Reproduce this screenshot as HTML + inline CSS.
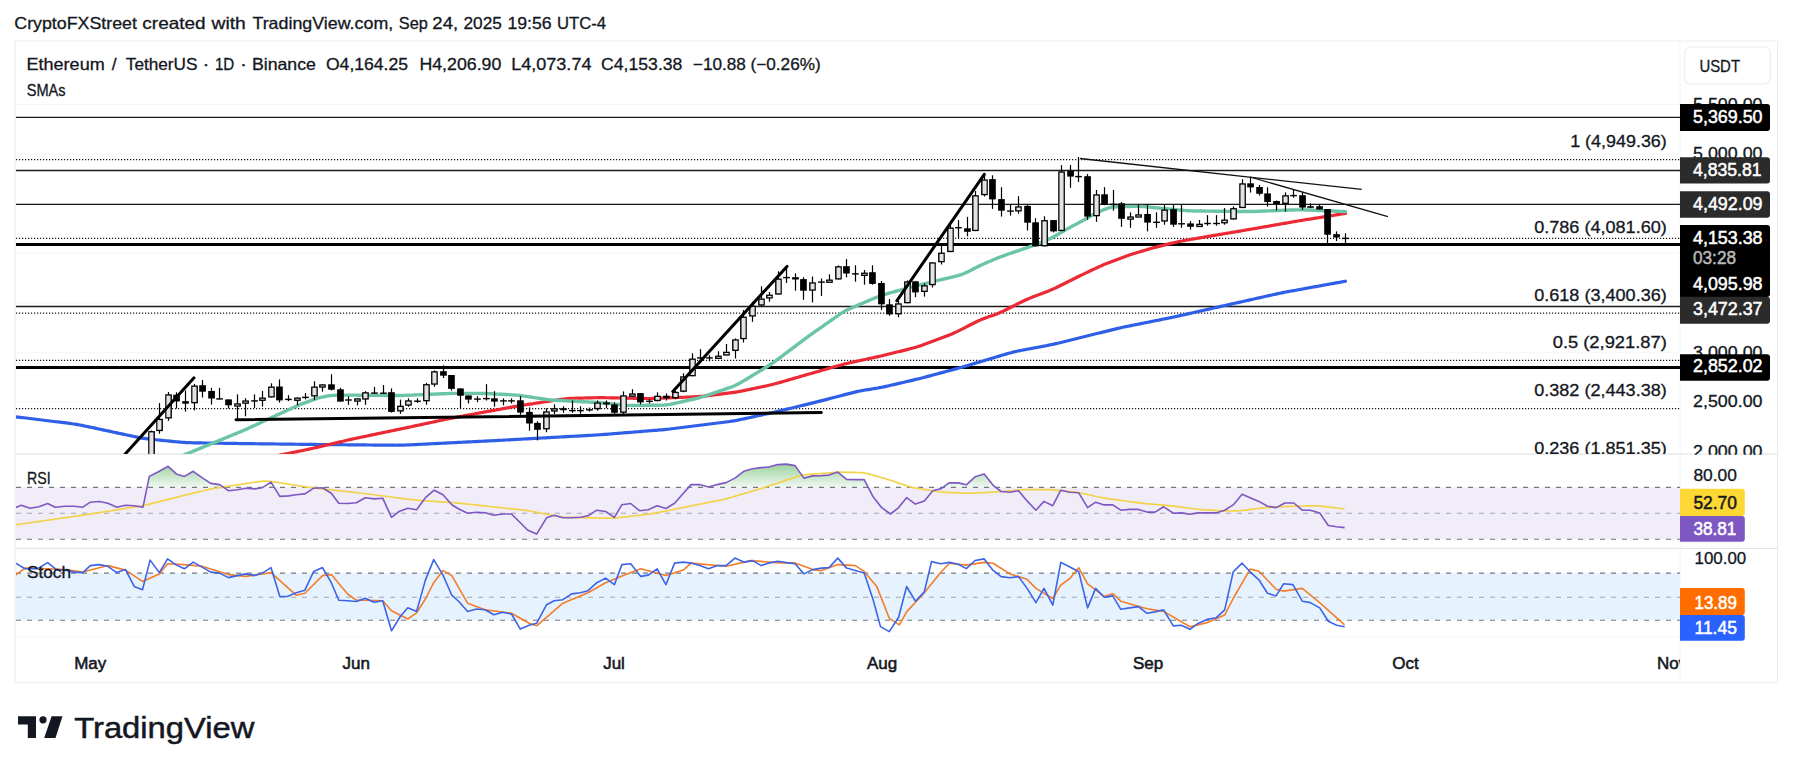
<!DOCTYPE html><html><head><meta charset="utf-8"><title>ETHUSDT chart</title><style>html,body{margin:0;padding:0;background:#fff;width:1793px;height:773px;overflow:hidden}svg{position:absolute;left:0;top:0;display:block}text{font-family:"Liberation Sans",sans-serif}</style></head><body>
<svg width="1793" height="773" viewBox="0 0 1793 773">
<defs><clipPath id="main"><rect x="16" y="42" width="1664" height="412"/></clipPath><clipPath id="rsi"><rect x="16" y="455" width="1664" height="93"/></clipPath><clipPath id="sto"><rect x="16" y="549" width="1664" height="88"/></clipPath><clipPath id="above70"><rect x="16" y="455" width="1664" height="32.4"/></clipPath><linearGradient id="gfill" gradientUnits="userSpaceOnUse" x1="0" y1="462" x2="0" y2="487.4"><stop offset="0" stop-color="#4caf50" stop-opacity="0.6"/><stop offset="1" stop-color="#4caf50" stop-opacity="0.08"/></linearGradient></defs>
<text x="14.32" y="28.8" font-size="16.5" fill="#131722" text-anchor="start" font-weight="normal" textLength="122.57" lengthAdjust="spacingAndGlyphs" stroke="#131722" stroke-width="0.3">CryptoFXStreet</text>
<text x="142.35" y="28.8" font-size="16.5" fill="#131722" text-anchor="start" font-weight="normal" textLength="63.25" lengthAdjust="spacingAndGlyphs" stroke="#131722" stroke-width="0.3">created</text>
<text x="211.5" y="28.8" font-size="16.5" fill="#131722" text-anchor="start" font-weight="normal" textLength="34.3" lengthAdjust="spacingAndGlyphs" stroke="#131722" stroke-width="0.3">with</text>
<text x="252.4" y="28.8" font-size="16.5" fill="#131722" text-anchor="start" font-weight="normal" textLength="140.83" lengthAdjust="spacingAndGlyphs" stroke="#131722" stroke-width="0.3">TradingView.com,</text>
<text x="398.81" y="28.8" font-size="16.5" fill="#131722" text-anchor="start" font-weight="normal" textLength="29.04" lengthAdjust="spacingAndGlyphs" stroke="#131722" stroke-width="0.3">Sep</text>
<text x="432.38" y="28.8" font-size="16.5" fill="#131722" text-anchor="start" font-weight="normal" textLength="25.67" lengthAdjust="spacingAndGlyphs" stroke="#131722" stroke-width="0.3">24,</text>
<text x="463.56" y="28.8" font-size="16.5" fill="#131722" text-anchor="start" font-weight="normal" textLength="38.29" lengthAdjust="spacingAndGlyphs" stroke="#131722" stroke-width="0.3">2025</text>
<text x="507.43" y="28.8" font-size="16.5" fill="#131722" text-anchor="start" font-weight="normal" textLength="44.19" lengthAdjust="spacingAndGlyphs" stroke="#131722" stroke-width="0.3">19:56</text>
<text x="556.99" y="28.8" font-size="16.5" fill="#131722" text-anchor="start" font-weight="normal" textLength="49.11" lengthAdjust="spacingAndGlyphs" stroke="#131722" stroke-width="0.3">UTC-4</text>
<rect x="15" y="41" width="1762.5" height="641.7" fill="none" stroke="#ededed" stroke-width="1.1"/>
<line x1="16" x2="1680" y1="104.5" y2="104.5" stroke="#f6f6f6" stroke-width="1"/>
<line x1="16" x2="1680" y1="154" y2="154" stroke="#f6f6f6" stroke-width="1"/>
<line x1="16" x2="1680" y1="203.6" y2="203.6" stroke="#f6f6f6" stroke-width="1"/>
<line x1="16" x2="1680" y1="253.2" y2="253.2" stroke="#f6f6f6" stroke-width="1"/>
<line x1="16" x2="1680" y1="302.8" y2="302.8" stroke="#f6f6f6" stroke-width="1"/>
<line x1="16" x2="1680" y1="352.3" y2="352.3" stroke="#f6f6f6" stroke-width="1"/>
<line x1="16" x2="1680" y1="401.9" y2="401.9" stroke="#f6f6f6" stroke-width="1"/>
<line x1="16" x2="1777" y1="454.2" y2="454.2" stroke="#e4e4e4" stroke-width="1.2"/>
<line x1="16" x2="1777" y1="548.3" y2="548.3" stroke="#e4e4e4" stroke-width="1.2"/>
<line x1="16" x2="1680" y1="636.8" y2="636.8" stroke="#f4f4f4" stroke-width="1"/>
<line x1="1680" x2="1680" y1="42" y2="682" stroke="#f4f4f4" stroke-width="1"/>
<g clip-path="url(#main)">
<line x1="16" x2="1680" y1="117.4" y2="117.4" stroke="#1a1a1a" stroke-width="1.3"/>
<line x1="16" x2="1680" y1="159.6" y2="159.6" stroke="#111" stroke-width="1.2" stroke-dasharray="1.2 1.8"/>
<line x1="16" x2="1680" y1="170.5" y2="170.5" stroke="#1a1a1a" stroke-width="1.3"/>
<line x1="16" x2="1680" y1="204.4" y2="204.4" stroke="#1a1a1a" stroke-width="1.3"/>
<line x1="16" x2="1680" y1="238.4" y2="238.4" stroke="#111" stroke-width="1.2" stroke-dasharray="1.2 1.8"/>
<line x1="16" x2="1680" y1="306.5" y2="306.5" stroke="#1a1a1a" stroke-width="1.3"/>
<line x1="16" x2="1680" y1="313.2" y2="313.2" stroke="#111" stroke-width="1.2" stroke-dasharray="1.2 1.8"/>
<line x1="16" x2="1680" y1="360.4" y2="360.4" stroke="#111" stroke-width="1.2" stroke-dasharray="1.2 1.8"/>
<line x1="16" x2="1680" y1="408.6" y2="408.6" stroke="#111" stroke-width="1.2" stroke-dasharray="1.2 1.8"/>
<line x1="16" x2="1680" y1="244.5" y2="244.5" stroke="#000" stroke-width="3"/>
<line x1="16" x2="1680" y1="367.4" y2="367.4" stroke="#000" stroke-width="3"/>
<path d="M15.9,416.80 L17.9,417.05 L19.9,417.29 L21.9,417.54 L23.9,417.78 L25.9,418.03 L27.9,418.28 L29.9,418.52 L31.9,418.77 L33.9,419.01 L35.9,419.26 L37.9,419.50 L39.9,419.75 L41.9,420.00 L43.9,420.24 L45.9,420.49 L47.9,420.73 L49.9,420.98 L51.9,421.23 L53.9,421.47 L55.9,421.72 L57.9,421.96 L59.9,422.21 L61.9,422.46 L63.9,422.70 L65.9,422.95 L67.9,423.20 L69.9,423.45 L71.9,423.72 L73.9,424.01 L75.9,424.31 L77.9,424.65 L79.9,425.02 L81.9,425.41 L83.9,425.81 L85.9,426.23 L87.9,426.65 L89.9,427.08 L91.9,427.51 L93.9,427.93 L95.9,428.36 L97.9,428.79 L99.9,429.22 L101.9,429.64 L103.9,430.07 L105.9,430.50 L107.9,430.93 L109.9,431.35 L111.9,431.78 L113.9,432.21 L115.9,432.64 L117.9,433.06 L119.9,433.49 L121.9,433.92 L123.9,434.35 L125.9,434.77 L127.9,435.20 L129.9,435.63 L131.9,436.06 L133.9,436.48 L135.9,436.90 L137.9,437.31 L139.9,437.70 L141.9,438.06 L143.9,438.39 L145.9,438.68 L147.9,438.94 L149.9,439.17 L151.9,439.38 L153.9,439.58 L155.9,439.78 L157.9,439.98 L159.9,440.18 L161.9,440.37 L163.9,440.57 L165.9,440.76 L167.9,440.96 L169.9,441.15 L171.9,441.35 L173.9,441.54 L175.9,441.74 L177.9,441.93 L179.9,442.11 L181.9,442.28 L183.9,442.42 L185.9,442.55 L187.9,442.65 L189.9,442.72 L191.9,442.77 L193.9,442.82 L195.9,442.85 L197.9,442.89 L199.9,442.92 L201.9,442.95 L203.9,442.98 L205.9,443.01 L207.9,443.04 L209.9,443.07 L211.9,443.10 L213.9,443.13 L215.9,443.16 L217.9,443.20 L219.9,443.23 L221.9,443.26 L223.9,443.29 L225.9,443.32 L227.9,443.35 L229.9,443.38 L231.9,443.41 L233.9,443.44 L235.9,443.47 L237.9,443.50 L239.9,443.53 L241.9,443.56 L243.9,443.59 L245.9,443.62 L247.9,443.64 L249.9,443.67 L251.9,443.69 L253.9,443.72 L255.9,443.74 L257.9,443.77 L259.9,443.79 L261.9,443.82 L263.9,443.84 L265.9,443.86 L267.9,443.89 L269.9,443.91 L271.9,443.94 L273.9,443.96 L275.9,443.99 L277.9,444.01 L279.9,444.03 L281.9,444.06 L283.9,444.08 L285.9,444.11 L287.9,444.13 L289.9,444.16 L291.9,444.18 L293.9,444.20 L295.9,444.23 L297.9,444.25 L299.9,444.28 L301.9,444.30 L303.9,444.33 L305.9,444.35 L307.9,444.37 L309.9,444.39 L311.9,444.42 L313.9,444.44 L315.9,444.46 L317.9,444.48 L319.9,444.50 L321.9,444.52 L323.9,444.54 L325.9,444.56 L327.9,444.58 L329.9,444.60 L331.9,444.62 L333.9,444.64 L335.9,444.66 L337.9,444.68 L339.9,444.70 L341.9,444.72 L343.9,444.74 L345.9,444.76 L347.9,444.78 L349.9,444.80 L351.9,444.82 L353.9,444.84 L355.9,444.86 L357.9,444.88 L359.9,444.90 L361.9,444.92 L363.9,444.94 L365.9,444.96 L367.9,444.98 L369.9,445.00 L371.9,445.02 L373.9,445.04 L375.9,445.06 L377.9,445.08 L379.9,445.10 L381.9,445.12 L383.9,445.14 L385.9,445.16 L387.9,445.18 L389.9,445.19 L391.9,445.21 L393.9,445.22 L395.9,445.23 L397.9,445.22 L399.9,445.19 L401.9,445.15 L403.9,445.08 L405.9,445.01 L407.9,444.92 L409.9,444.82 L411.9,444.73 L413.9,444.63 L415.9,444.53 L417.9,444.43 L419.9,444.33 L421.9,444.23 L423.9,444.13 L425.9,444.03 L427.9,443.93 L429.9,443.83 L431.9,443.73 L433.9,443.63 L435.9,443.53 L437.9,443.43 L439.9,443.33 L441.9,443.23 L443.9,443.13 L445.9,443.03 L447.9,442.93 L449.9,442.83 L451.9,442.74 L453.9,442.64 L455.9,442.54 L457.9,442.44 L459.9,442.34 L461.9,442.24 L463.9,442.14 L465.9,442.04 L467.9,441.94 L469.9,441.84 L471.9,441.74 L473.9,441.64 L475.9,441.54 L477.9,441.44 L479.9,441.34 L481.9,441.24 L483.9,441.14 L485.9,441.04 L487.9,440.94 L489.9,440.84 L491.9,440.74 L493.9,440.64 L495.9,440.54 L497.9,440.44 L499.9,440.34 L501.9,440.23 L503.9,440.12 L505.9,440.02 L507.9,439.91 L509.9,439.80 L511.9,439.68 L513.9,439.57 L515.9,439.46 L517.9,439.35 L519.9,439.24 L521.9,439.13 L523.9,439.02 L525.9,438.91 L527.9,438.80 L529.9,438.69 L531.9,438.58 L533.9,438.46 L535.9,438.35 L537.9,438.24 L539.9,438.13 L541.9,438.02 L543.9,437.91 L545.9,437.80 L547.9,437.69 L549.9,437.58 L551.9,437.47 L553.9,437.36 L555.9,437.25 L557.9,437.13 L559.9,437.02 L561.9,436.91 L563.9,436.80 L565.9,436.69 L567.9,436.58 L569.9,436.47 L571.9,436.36 L573.9,436.25 L575.9,436.14 L577.9,436.03 L579.9,435.91 L581.9,435.80 L583.9,435.69 L585.9,435.58 L587.9,435.47 L589.9,435.36 L591.9,435.25 L593.9,435.13 L595.9,435.01 L597.9,434.89 L599.9,434.76 L601.9,434.62 L603.9,434.47 L605.9,434.32 L607.9,434.16 L609.9,434.00 L611.9,433.84 L613.9,433.68 L615.9,433.52 L617.9,433.36 L619.9,433.20 L621.9,433.03 L623.9,432.87 L625.9,432.71 L627.9,432.55 L629.9,432.39 L631.9,432.23 L633.9,432.07 L635.9,431.91 L637.9,431.75 L639.9,431.58 L641.9,431.42 L643.9,431.26 L645.9,431.10 L647.9,430.94 L649.9,430.78 L651.9,430.62 L653.9,430.46 L655.9,430.29 L657.9,430.13 L659.9,429.96 L661.9,429.79 L663.9,429.61 L665.9,429.42 L667.9,429.22 L669.9,429.00 L671.9,428.77 L673.9,428.53 L675.9,428.28 L677.9,428.03 L679.9,427.78 L681.9,427.53 L683.9,427.28 L685.9,427.03 L687.9,426.78 L689.9,426.53 L691.9,426.28 L693.9,426.03 L695.9,425.78 L697.9,425.53 L699.9,425.28 L701.9,425.02 L703.9,424.77 L705.9,424.52 L707.9,424.27 L709.9,424.02 L711.9,423.77 L713.9,423.52 L715.9,423.27 L717.9,423.02 L719.9,422.77 L721.9,422.52 L723.9,422.26 L725.9,422.01 L727.9,421.74 L729.9,421.46 L731.9,421.16 L733.9,420.83 L735.9,420.47 L737.9,420.09 L739.9,419.68 L741.9,419.26 L743.9,418.83 L745.9,418.39 L747.9,417.96 L749.9,417.52 L751.9,417.08 L753.9,416.64 L755.9,416.20 L757.9,415.76 L759.9,415.33 L761.9,414.89 L763.9,414.45 L765.9,414.01 L767.9,413.57 L769.9,413.13 L771.9,412.69 L773.9,412.24 L775.9,411.78 L777.9,411.32 L779.9,410.85 L781.9,410.37 L783.9,409.89 L785.9,409.41 L787.9,408.93 L789.9,408.45 L791.9,407.97 L793.9,407.49 L795.9,407.00 L797.9,406.52 L799.9,406.04 L801.9,405.56 L803.9,405.08 L805.9,404.59 L807.9,404.11 L809.9,403.63 L811.9,403.14 L813.9,402.65 L815.9,402.16 L817.9,401.66 L819.9,401.15 L821.9,400.64 L823.9,400.13 L825.9,399.61 L827.9,399.09 L829.9,398.57 L831.9,398.04 L833.9,397.52 L835.9,397.00 L837.9,396.48 L839.9,395.96 L841.9,395.44 L843.9,394.92 L845.9,394.39 L847.9,393.87 L849.9,393.36 L851.9,392.85 L853.9,392.35 L855.9,391.87 L857.9,391.42 L859.9,391.00 L861.9,390.62 L863.9,390.26 L865.9,389.93 L867.9,389.62 L869.9,389.31 L871.9,389.01 L873.9,388.69 L875.9,388.37 L877.9,388.02 L879.9,387.66 L881.9,387.26 L883.9,386.84 L885.9,386.41 L887.9,385.95 L889.9,385.50 L891.9,385.03 L893.9,384.57 L895.9,384.10 L897.9,383.64 L899.9,383.17 L901.9,382.71 L903.9,382.24 L905.9,381.78 L907.9,381.31 L909.9,380.85 L911.9,380.38 L913.9,379.91 L915.9,379.43 L917.9,378.95 L919.9,378.45 L921.9,377.95 L923.9,377.43 L925.9,376.91 L927.9,376.38 L929.9,375.85 L931.9,375.31 L933.9,374.77 L935.9,374.24 L937.9,373.70 L939.9,373.17 L941.9,372.63 L943.9,372.10 L945.9,371.56 L947.9,371.02 L949.9,370.49 L951.9,369.95 L953.9,369.41 L955.9,368.86 L957.9,368.31 L959.9,367.75 L961.9,367.18 L963.9,366.60 L965.9,366.02 L967.9,365.43 L969.9,364.83 L971.9,364.24 L973.9,363.64 L975.9,363.04 L977.9,362.45 L979.9,361.85 L981.9,361.25 L983.9,360.66 L985.9,360.06 L987.9,359.46 L989.9,358.86 L991.9,358.27 L993.9,357.67 L995.9,357.07 L997.9,356.48 L999.9,355.88 L1001.9,355.28 L1003.9,354.69 L1005.9,354.10 L1007.9,353.52 L1009.9,352.96 L1011.9,352.42 L1013.9,351.92 L1015.9,351.45 L1017.9,351.02 L1019.9,350.61 L1021.9,350.22 L1023.9,349.83 L1025.9,349.46 L1027.9,349.08 L1029.9,348.71 L1031.9,348.33 L1033.9,347.96 L1035.9,347.59 L1037.9,347.21 L1039.9,346.84 L1041.9,346.46 L1043.9,346.09 L1045.9,345.71 L1047.9,345.33 L1049.9,344.93 L1051.9,344.53 L1053.9,344.10 L1055.9,343.66 L1057.9,343.20 L1059.9,342.72 L1061.9,342.24 L1063.9,341.74 L1065.9,341.25 L1067.9,340.76 L1069.9,340.26 L1071.9,339.77 L1073.9,339.27 L1075.9,338.77 L1077.9,338.28 L1079.9,337.78 L1081.9,337.29 L1083.9,336.79 L1085.9,336.30 L1087.9,335.80 L1089.9,335.31 L1091.9,334.81 L1093.9,334.31 L1095.9,333.82 L1097.9,333.32 L1099.9,332.83 L1101.9,332.33 L1103.9,331.84 L1105.9,331.34 L1107.9,330.85 L1109.9,330.35 L1111.9,329.86 L1113.9,329.37 L1115.9,328.88 L1117.9,328.41 L1119.9,327.94 L1121.9,327.49 L1123.9,327.06 L1125.9,326.64 L1127.9,326.23 L1129.9,325.82 L1131.9,325.42 L1133.9,325.02 L1135.9,324.62 L1137.9,324.22 L1139.9,323.82 L1141.9,323.42 L1143.9,323.02 L1145.9,322.62 L1147.9,322.22 L1149.9,321.82 L1151.9,321.42 L1153.9,321.02 L1155.9,320.62 L1157.9,320.22 L1159.9,319.82 L1161.9,319.42 L1163.9,319.02 L1165.9,318.62 L1167.9,318.21 L1169.9,317.81 L1171.9,317.40 L1173.9,316.98 L1175.9,316.55 L1177.9,316.11 L1179.9,315.67 L1181.9,315.22 L1183.9,314.77 L1185.9,314.32 L1187.9,313.87 L1189.9,313.42 L1191.9,312.96 L1193.9,312.51 L1195.9,312.06 L1197.9,311.61 L1199.9,311.16 L1201.9,310.70 L1203.9,310.25 L1205.9,309.80 L1207.9,309.35 L1209.9,308.89 L1211.9,308.44 L1213.9,307.99 L1215.9,307.54 L1217.9,307.08 L1219.9,306.63 L1221.9,306.18 L1223.9,305.73 L1225.9,305.28 L1227.9,304.83 L1229.9,304.38 L1231.9,303.93 L1233.9,303.48 L1235.9,303.03 L1237.9,302.58 L1239.9,302.14 L1241.9,301.69 L1243.9,301.24 L1245.9,300.79 L1247.9,300.34 L1249.9,299.90 L1251.9,299.45 L1253.9,299.00 L1255.9,298.55 L1257.9,298.11 L1259.9,297.66 L1261.9,297.21 L1263.9,296.76 L1265.9,296.31 L1267.9,295.87 L1269.9,295.42 L1271.9,294.97 L1273.9,294.53 L1275.9,294.09 L1277.9,293.66 L1279.9,293.23 L1281.9,292.82 L1283.9,292.43 L1285.9,292.04 L1287.9,291.67 L1289.9,291.30 L1291.9,290.93 L1293.9,290.57 L1295.9,290.20 L1297.9,289.84 L1299.9,289.48 L1301.9,289.11 L1303.9,288.75 L1305.9,288.39 L1307.9,288.03 L1309.9,287.66 L1311.9,287.30 L1313.9,286.94 L1315.9,286.57 L1317.9,286.21 L1319.9,285.85 L1321.9,285.48 L1323.9,285.12 L1325.9,284.76 L1327.9,284.39 L1329.9,284.03 L1331.9,283.67 L1333.9,283.31 L1335.9,282.94 L1337.9,282.58 L1339.9,282.22 L1341.9,281.85 L1343.9,281.49 L1345.4,281.22" fill="none" stroke="#2f5fe6" stroke-width="3.2" stroke-linecap="round"/>
<path d="M278.0,455.50 L280.0,455.09 L282.0,454.69 L284.0,454.28 L286.0,453.88 L288.0,453.47 L290.0,453.06 L292.0,452.66 L294.0,452.25 L296.0,451.84 L298.0,451.44 L300.0,451.03 L302.0,450.62 L304.0,450.21 L306.0,449.79 L308.0,449.37 L310.0,448.93 L312.0,448.49 L314.0,448.04 L316.0,447.57 L318.0,447.11 L320.0,446.64 L322.0,446.16 L324.0,445.69 L326.0,445.22 L328.0,444.75 L330.0,444.27 L332.0,443.80 L334.0,443.33 L336.0,442.86 L338.0,442.38 L340.0,441.91 L342.0,441.44 L344.0,440.97 L346.0,440.51 L348.0,440.05 L350.0,439.60 L352.0,439.16 L354.0,438.72 L356.0,438.29 L358.0,437.87 L360.0,437.45 L362.0,437.03 L364.0,436.61 L366.0,436.20 L368.0,435.78 L370.0,435.36 L372.0,434.94 L374.0,434.52 L376.0,434.10 L378.0,433.69 L380.0,433.27 L382.0,432.85 L384.0,432.43 L386.0,432.01 L388.0,431.59 L390.0,431.18 L392.0,430.76 L394.0,430.34 L396.0,429.92 L398.0,429.50 L400.0,429.08 L402.0,428.65 L404.0,428.23 L406.0,427.81 L408.0,427.38 L410.0,426.95 L412.0,426.53 L414.0,426.10 L416.0,425.67 L418.0,425.25 L420.0,424.82 L422.0,424.40 L424.0,423.97 L426.0,423.54 L428.0,423.12 L430.0,422.69 L432.0,422.26 L434.0,421.84 L436.0,421.41 L438.0,420.99 L440.0,420.56 L442.0,420.14 L444.0,419.71 L446.0,419.29 L448.0,418.88 L450.0,418.48 L452.0,418.08 L454.0,417.70 L456.0,417.32 L458.0,416.94 L460.0,416.57 L462.0,416.20 L464.0,415.84 L466.0,415.47 L468.0,415.10 L470.0,414.73 L472.0,414.37 L474.0,414.00 L476.0,413.63 L478.0,413.26 L480.0,412.89 L482.0,412.53 L484.0,412.16 L486.0,411.79 L488.0,411.42 L490.0,411.06 L492.0,410.69 L494.0,410.32 L496.0,409.95 L498.0,409.59 L500.0,409.22 L502.0,408.85 L504.0,408.48 L506.0,408.11 L508.0,407.75 L510.0,407.38 L512.0,407.02 L514.0,406.67 L516.0,406.32 L518.0,405.98 L520.0,405.65 L522.0,405.33 L524.0,405.02 L526.0,404.72 L528.0,404.41 L530.0,404.11 L532.0,403.80 L534.0,403.50 L536.0,403.20 L538.0,402.90 L540.0,402.59 L542.0,402.29 L544.0,401.99 L546.0,401.69 L548.0,401.38 L550.0,401.08 L552.0,400.78 L554.0,400.47 L556.0,400.17 L558.0,399.87 L560.0,399.58 L562.0,399.30 L564.0,399.04 L566.0,398.82 L568.0,398.62 L570.0,398.47 L572.0,398.36 L574.0,398.27 L576.0,398.21 L578.0,398.15 L580.0,398.10 L582.0,398.05 L584.0,398.00 L586.0,397.95 L588.0,397.90 L590.0,397.85 L592.0,397.80 L594.0,397.76 L596.0,397.73 L598.0,397.70 L600.0,397.69 L602.0,397.69 L604.0,397.71 L606.0,397.73 L608.0,397.76 L610.0,397.80 L612.0,397.84 L614.0,397.88 L616.0,397.92 L618.0,397.96 L620.0,398.00 L622.0,398.04 L624.0,398.08 L626.0,398.12 L628.0,398.16 L630.0,398.20 L632.0,398.24 L634.0,398.28 L636.0,398.32 L638.0,398.36 L640.0,398.40 L642.0,398.43 L644.0,398.46 L646.0,398.48 L648.0,398.49 L650.0,398.48 L652.0,398.45 L654.0,398.40 L656.0,398.34 L658.0,398.27 L660.0,398.20 L662.0,398.12 L664.0,398.04 L666.0,397.96 L668.0,397.88 L670.0,397.80 L672.0,397.72 L674.0,397.64 L676.0,397.56 L678.0,397.48 L680.0,397.40 L682.0,397.32 L684.0,397.24 L686.0,397.16 L688.0,397.08 L690.0,397.00 L692.0,396.91 L694.0,396.82 L696.0,396.71 L698.0,396.59 L700.0,396.44 L702.0,396.26 L704.0,396.07 L706.0,395.85 L708.0,395.62 L710.0,395.38 L712.0,395.14 L714.0,394.90 L716.0,394.66 L718.0,394.41 L720.0,394.17 L722.0,393.93 L724.0,393.68 L726.0,393.44 L728.0,393.19 L730.0,392.93 L732.0,392.66 L734.0,392.37 L736.0,392.06 L738.0,391.72 L740.0,391.35 L742.0,390.96 L744.0,390.56 L746.0,390.14 L748.0,389.73 L750.0,389.31 L752.0,388.89 L754.0,388.47 L756.0,388.05 L758.0,387.64 L760.0,387.22 L762.0,386.80 L764.0,386.37 L766.0,385.94 L768.0,385.50 L770.0,385.04 L772.0,384.56 L774.0,384.06 L776.0,383.53 L778.0,382.98 L780.0,382.41 L782.0,381.84 L784.0,381.26 L786.0,380.68 L788.0,380.10 L790.0,379.52 L792.0,378.94 L794.0,378.36 L796.0,377.78 L798.0,377.20 L800.0,376.62 L802.0,376.04 L804.0,375.47 L806.0,374.89 L808.0,374.31 L810.0,373.74 L812.0,373.17 L814.0,372.59 L816.0,372.02 L818.0,371.45 L820.0,370.88 L822.0,370.32 L824.0,369.75 L826.0,369.18 L828.0,368.61 L830.0,368.04 L832.0,367.47 L834.0,366.90 L836.0,366.34 L838.0,365.78 L840.0,365.22 L842.0,364.68 L844.0,364.16 L846.0,363.67 L848.0,363.19 L850.0,362.73 L852.0,362.29 L854.0,361.85 L856.0,361.42 L858.0,360.99 L860.0,360.56 L862.0,360.13 L864.0,359.70 L866.0,359.27 L868.0,358.84 L870.0,358.41 L872.0,357.97 L874.0,357.54 L876.0,357.10 L878.0,356.66 L880.0,356.21 L882.0,355.75 L884.0,355.27 L886.0,354.79 L888.0,354.30 L890.0,353.81 L892.0,353.31 L894.0,352.82 L896.0,352.32 L898.0,351.82 L900.0,351.33 L902.0,350.83 L904.0,350.33 L906.0,349.83 L908.0,349.33 L910.0,348.82 L912.0,348.30 L914.0,347.76 L916.0,347.18 L918.0,346.57 L920.0,345.91 L922.0,345.23 L924.0,344.51 L926.0,343.78 L928.0,343.04 L930.0,342.30 L932.0,341.56 L934.0,340.81 L936.0,340.06 L938.0,339.32 L940.0,338.57 L942.0,337.82 L944.0,337.07 L946.0,336.32 L948.0,335.54 L950.0,334.74 L952.0,333.91 L954.0,333.03 L956.0,332.11 L958.0,331.14 L960.0,330.15 L962.0,329.13 L964.0,328.10 L966.0,327.06 L968.0,326.03 L970.0,325.00 L972.0,323.97 L974.0,322.96 L976.0,321.98 L978.0,321.04 L980.0,320.14 L982.0,319.31 L984.0,318.52 L986.0,317.78 L988.0,317.06 L990.0,316.35 L992.0,315.64 L994.0,314.92 L996.0,314.18 L998.0,313.40 L1000.0,312.57 L1002.0,311.68 L1004.0,310.75 L1006.0,309.77 L1008.0,308.77 L1010.0,307.76 L1012.0,306.74 L1014.0,305.71 L1016.0,304.69 L1018.0,303.67 L1020.0,302.67 L1022.0,301.69 L1024.0,300.74 L1026.0,299.83 L1028.0,298.96 L1030.0,298.14 L1032.0,297.34 L1034.0,296.57 L1036.0,295.81 L1038.0,295.05 L1040.0,294.30 L1042.0,293.54 L1044.0,292.78 L1046.0,292.00 L1048.0,291.21 L1050.0,290.38 L1052.0,289.52 L1054.0,288.61 L1056.0,287.68 L1058.0,286.71 L1060.0,285.72 L1062.0,284.73 L1064.0,283.73 L1066.0,282.72 L1068.0,281.72 L1070.0,280.72 L1072.0,279.72 L1074.0,278.73 L1076.0,277.74 L1078.0,276.76 L1080.0,275.79 L1082.0,274.82 L1084.0,273.87 L1086.0,272.91 L1088.0,271.96 L1090.0,271.01 L1092.0,270.06 L1094.0,269.12 L1096.0,268.18 L1098.0,267.25 L1100.0,266.33 L1102.0,265.44 L1104.0,264.59 L1106.0,263.76 L1108.0,262.96 L1110.0,262.19 L1112.0,261.42 L1114.0,260.67 L1116.0,259.92 L1118.0,259.17 L1120.0,258.42 L1122.0,257.68 L1124.0,256.95 L1126.0,256.23 L1128.0,255.53 L1130.0,254.85 L1132.0,254.20 L1134.0,253.56 L1136.0,252.95 L1138.0,252.34 L1140.0,251.74 L1142.0,251.14 L1144.0,250.54 L1146.0,249.95 L1148.0,249.36 L1150.0,248.77 L1152.0,248.20 L1154.0,247.64 L1156.0,247.10 L1158.0,246.58 L1160.0,246.08 L1162.0,245.58 L1164.0,245.10 L1166.0,244.62 L1168.0,244.14 L1170.0,243.66 L1172.0,243.18 L1174.0,242.71 L1176.0,242.25 L1178.0,241.80 L1180.0,241.37 L1182.0,240.96 L1184.0,240.57 L1186.0,240.20 L1188.0,239.85 L1190.0,239.50 L1192.0,239.16 L1194.0,238.82 L1196.0,238.48 L1198.0,238.14 L1200.0,237.80 L1202.0,237.47 L1204.0,237.13 L1206.0,236.79 L1208.0,236.45 L1210.0,236.12 L1212.0,235.78 L1214.0,235.44 L1216.0,235.10 L1218.0,234.77 L1220.0,234.43 L1222.0,234.09 L1224.0,233.75 L1226.0,233.42 L1228.0,233.08 L1230.0,232.74 L1232.0,232.40 L1234.0,232.07 L1236.0,231.73 L1238.0,231.39 L1240.0,231.05 L1242.0,230.72 L1244.0,230.38 L1246.0,230.04 L1248.0,229.70 L1250.0,229.36 L1252.0,229.01 L1254.0,228.67 L1256.0,228.32 L1258.0,227.97 L1260.0,227.62 L1262.0,227.27 L1264.0,226.92 L1266.0,226.57 L1268.0,226.22 L1270.0,225.87 L1272.0,225.52 L1274.0,225.17 L1276.0,224.83 L1278.0,224.48 L1280.0,224.13 L1282.0,223.78 L1284.0,223.43 L1286.0,223.08 L1288.0,222.73 L1290.0,222.38 L1292.0,222.03 L1294.0,221.68 L1296.0,221.34 L1298.0,221.00 L1300.0,220.66 L1302.0,220.33 L1304.0,220.01 L1306.0,219.69 L1308.0,219.37 L1310.0,219.05 L1312.0,218.73 L1314.0,218.41 L1316.0,218.09 L1318.0,217.77 L1320.0,217.46 L1322.0,217.14 L1324.0,216.82 L1326.0,216.50 L1328.0,216.18 L1330.0,215.87 L1332.0,215.55 L1334.0,215.23 L1336.0,214.91 L1338.0,214.59 L1340.0,214.27 L1342.0,213.96 L1344.0,213.64 L1345.5,213.40" fill="none" stroke="#ec2a36" stroke-width="3.2" stroke-linecap="round"/>
<path d="M184.0,455.00 L186.0,454.18 L188.0,453.35 L190.0,452.53 L192.0,451.70 L194.0,450.88 L196.0,450.06 L198.0,449.23 L200.0,448.41 L202.0,447.58 L204.0,446.76 L206.0,445.94 L208.0,445.11 L210.0,444.29 L212.0,443.47 L214.0,442.64 L216.0,441.82 L218.0,440.99 L220.0,440.17 L222.0,439.35 L224.0,438.52 L226.0,437.70 L228.0,436.87 L230.0,436.05 L232.0,435.23 L234.0,434.40 L236.0,433.58 L238.0,432.75 L240.0,431.92 L242.0,431.07 L244.0,430.21 L246.0,429.33 L248.0,428.43 L250.0,427.52 L252.0,426.61 L254.0,425.69 L256.0,424.77 L258.0,423.84 L260.0,422.92 L262.0,422.00 L264.0,421.08 L266.0,420.16 L268.0,419.24 L270.0,418.32 L272.0,417.40 L274.0,416.47 L276.0,415.55 L278.0,414.63 L280.0,413.71 L282.0,412.79 L284.0,411.87 L286.0,410.95 L288.0,410.03 L290.0,409.11 L292.0,408.19 L294.0,407.27 L296.0,406.37 L298.0,405.50 L300.0,404.65 L302.0,403.84 L304.0,403.07 L306.0,402.32 L308.0,401.58 L310.0,400.86 L312.0,400.15 L314.0,399.46 L316.0,398.82 L318.0,398.23 L320.0,397.69 L322.0,397.19 L324.0,396.73 L326.0,396.31 L328.0,395.94 L330.0,395.65 L332.0,395.45 L334.0,395.33 L336.0,395.26 L338.0,395.23 L340.0,395.20 L342.0,395.18 L344.0,395.16 L346.0,395.15 L348.0,395.14 L350.0,395.13 L352.0,395.13 L354.0,395.14 L356.0,395.16 L358.0,395.18 L360.0,395.20 L362.0,395.22 L364.0,395.24 L366.0,395.26 L368.0,395.28 L370.0,395.30 L372.0,395.32 L374.0,395.34 L376.0,395.36 L378.0,395.38 L380.0,395.40 L382.0,395.42 L384.0,395.44 L386.0,395.46 L388.0,395.48 L390.0,395.50 L392.0,395.52 L394.0,395.53 L396.0,395.54 L398.0,395.54 L400.0,395.52 L402.0,395.48 L404.0,395.42 L406.0,395.35 L408.0,395.26 L410.0,395.18 L412.0,395.09 L414.0,395.00 L416.0,394.92 L418.0,394.83 L420.0,394.74 L422.0,394.65 L424.0,394.57 L426.0,394.48 L428.0,394.39 L430.0,394.30 L432.0,394.22 L434.0,394.13 L436.0,394.04 L438.0,393.95 L440.0,393.86 L442.0,393.78 L444.0,393.69 L446.0,393.61 L448.0,393.54 L450.0,393.48 L452.0,393.44 L454.0,393.42 L456.0,393.41 L458.0,393.40 L460.0,393.40 L462.0,393.40 L464.0,393.40 L466.0,393.40 L468.0,393.40 L470.0,393.40 L472.0,393.40 L474.0,393.40 L476.0,393.40 L478.0,393.41 L480.0,393.42 L482.0,393.44 L484.0,393.48 L486.0,393.54 L488.0,393.62 L490.0,393.71 L492.0,393.81 L494.0,393.91 L496.0,394.01 L498.0,394.11 L500.0,394.21 L502.0,394.31 L504.0,394.41 L506.0,394.52 L508.0,394.62 L510.0,394.72 L512.0,394.84 L514.0,394.96 L516.0,395.12 L518.0,395.31 L520.0,395.54 L522.0,395.80 L524.0,396.08 L526.0,396.37 L528.0,396.67 L530.0,396.97 L532.0,397.26 L534.0,397.56 L536.0,397.86 L538.0,398.16 L540.0,398.46 L542.0,398.76 L544.0,399.05 L546.0,399.33 L548.0,399.60 L550.0,399.84 L552.0,400.04 L554.0,400.20 L556.0,400.34 L558.0,400.45 L560.0,400.56 L562.0,400.66 L564.0,400.76 L566.0,400.87 L568.0,400.97 L570.0,401.07 L572.0,401.17 L574.0,401.27 L576.0,401.38 L578.0,401.48 L580.0,401.58 L582.0,401.68 L584.0,401.78 L586.0,401.89 L588.0,401.99 L590.0,402.09 L592.0,402.19 L594.0,402.30 L596.0,402.41 L598.0,402.54 L600.0,402.69 L602.0,402.86 L604.0,403.05 L606.0,403.26 L608.0,403.47 L610.0,403.68 L612.0,403.90 L614.0,404.11 L616.0,404.33 L618.0,404.55 L620.0,404.76 L622.0,404.96 L624.0,405.13 L626.0,405.27 L628.0,405.36 L630.0,405.41 L632.0,405.43 L634.0,405.42 L636.0,405.41 L638.0,405.39 L640.0,405.37 L642.0,405.35 L644.0,405.33 L646.0,405.31 L648.0,405.29 L650.0,405.27 L652.0,405.25 L654.0,405.23 L656.0,405.21 L658.0,405.19 L660.0,405.16 L662.0,405.11 L664.0,405.02 L666.0,404.87 L668.0,404.63 L670.0,404.32 L672.0,403.94 L674.0,403.52 L676.0,403.08 L678.0,402.63 L680.0,402.18 L682.0,401.73 L684.0,401.28 L686.0,400.83 L688.0,400.38 L690.0,399.94 L692.0,399.48 L694.0,399.03 L696.0,398.56 L698.0,398.06 L700.0,397.53 L702.0,396.95 L704.0,396.33 L706.0,395.68 L708.0,395.01 L710.0,394.33 L712.0,393.65 L714.0,392.97 L716.0,392.28 L718.0,391.60 L720.0,390.92 L722.0,390.24 L724.0,389.56 L726.0,388.88 L728.0,388.19 L730.0,387.49 L732.0,386.75 L734.0,385.96 L736.0,385.07 L738.0,384.08 L740.0,382.99 L742.0,381.84 L744.0,380.64 L746.0,379.43 L748.0,378.22 L750.0,377.00 L752.0,375.78 L754.0,374.56 L756.0,373.35 L758.0,372.13 L760.0,370.91 L762.0,369.69 L764.0,368.47 L766.0,367.25 L768.0,366.00 L770.0,364.73 L772.0,363.41 L774.0,362.04 L776.0,360.61 L778.0,359.15 L780.0,357.66 L782.0,356.16 L784.0,354.66 L786.0,353.16 L788.0,351.65 L790.0,350.15 L792.0,348.65 L794.0,347.15 L796.0,345.64 L798.0,344.14 L800.0,342.64 L802.0,341.14 L804.0,339.64 L806.0,338.16 L808.0,336.69 L810.0,335.24 L812.0,333.81 L814.0,332.39 L816.0,330.98 L818.0,329.58 L820.0,328.17 L822.0,326.77 L824.0,325.36 L826.0,323.96 L828.0,322.56 L830.0,321.15 L832.0,319.75 L834.0,318.35 L836.0,316.95 L838.0,315.56 L840.0,314.19 L842.0,312.88 L844.0,311.66 L846.0,310.54 L848.0,309.52 L850.0,308.59 L852.0,307.70 L854.0,306.84 L856.0,305.99 L858.0,305.14 L860.0,304.29 L862.0,303.45 L864.0,302.60 L866.0,301.75 L868.0,300.90 L870.0,300.05 L872.0,299.20 L874.0,298.36 L876.0,297.53 L878.0,296.73 L880.0,295.97 L882.0,295.26 L884.0,294.62 L886.0,294.02 L888.0,293.45 L890.0,292.90 L892.0,292.35 L894.0,291.80 L896.0,291.25 L898.0,290.71 L900.0,290.16 L902.0,289.61 L904.0,289.06 L906.0,288.52 L908.0,287.97 L910.0,287.43 L912.0,286.88 L914.0,286.34 L916.0,285.82 L918.0,285.30 L920.0,284.79 L922.0,284.30 L924.0,283.81 L926.0,283.33 L928.0,282.85 L930.0,282.37 L932.0,281.89 L934.0,281.41 L936.0,280.92 L938.0,280.44 L940.0,279.96 L942.0,279.48 L944.0,279.00 L946.0,278.52 L948.0,278.04 L950.0,277.56 L952.0,277.07 L954.0,276.59 L956.0,276.09 L958.0,275.57 L960.0,274.99 L962.0,274.32 L964.0,273.54 L966.0,272.66 L968.0,271.70 L970.0,270.69 L972.0,269.66 L974.0,268.63 L976.0,267.61 L978.0,266.61 L980.0,265.64 L982.0,264.71 L984.0,263.81 L986.0,262.93 L988.0,262.06 L990.0,261.20 L992.0,260.34 L994.0,259.49 L996.0,258.65 L998.0,257.83 L1000.0,257.04 L1002.0,256.29 L1004.0,255.57 L1006.0,254.87 L1008.0,254.18 L1010.0,253.49 L1012.0,252.81 L1014.0,252.13 L1016.0,251.45 L1018.0,250.77 L1020.0,250.09 L1022.0,249.41 L1024.0,248.73 L1026.0,248.04 L1028.0,247.35 L1030.0,246.64 L1032.0,245.91 L1034.0,245.16 L1036.0,244.39 L1038.0,243.60 L1040.0,242.80 L1042.0,242.00 L1044.0,241.19 L1046.0,240.37 L1048.0,239.51 L1050.0,238.61 L1052.0,237.63 L1054.0,236.58 L1056.0,235.46 L1058.0,234.30 L1060.0,233.11 L1062.0,231.93 L1064.0,230.76 L1066.0,229.62 L1068.0,228.50 L1070.0,227.41 L1072.0,226.34 L1074.0,225.28 L1076.0,224.22 L1078.0,223.16 L1080.0,222.09 L1082.0,221.01 L1084.0,219.90 L1086.0,218.77 L1088.0,217.63 L1090.0,216.48 L1092.0,215.35 L1094.0,214.27 L1096.0,213.25 L1098.0,212.29 L1100.0,211.38 L1102.0,210.50 L1104.0,209.66 L1106.0,208.87 L1108.0,208.17 L1110.0,207.62 L1112.0,207.22 L1114.0,206.96 L1116.0,206.82 L1118.0,206.73 L1120.0,206.67 L1122.0,206.62 L1124.0,206.57 L1126.0,206.53 L1128.0,206.48 L1130.0,206.43 L1132.0,206.39 L1134.0,206.35 L1136.0,206.33 L1138.0,206.34 L1140.0,206.40 L1142.0,206.50 L1144.0,206.64 L1146.0,206.80 L1148.0,206.99 L1150.0,207.17 L1152.0,207.37 L1154.0,207.56 L1156.0,207.75 L1158.0,207.94 L1160.0,208.13 L1162.0,208.32 L1164.0,208.51 L1166.0,208.70 L1168.0,208.89 L1170.0,209.08 L1172.0,209.28 L1174.0,209.47 L1176.0,209.66 L1178.0,209.85 L1180.0,210.04 L1182.0,210.23 L1184.0,210.41 L1186.0,210.57 L1188.0,210.71 L1190.0,210.82 L1192.0,210.89 L1194.0,210.94 L1196.0,210.97 L1198.0,211.00 L1200.0,211.03 L1202.0,211.05 L1204.0,211.07 L1206.0,211.09 L1208.0,211.12 L1210.0,211.14 L1212.0,211.16 L1214.0,211.19 L1216.0,211.21 L1218.0,211.23 L1220.0,211.25 L1222.0,211.28 L1224.0,211.30 L1226.0,211.32 L1228.0,211.34 L1230.0,211.37 L1232.0,211.39 L1234.0,211.41 L1236.0,211.44 L1238.0,211.46 L1240.0,211.48 L1242.0,211.50 L1244.0,211.52 L1246.0,211.54 L1248.0,211.54 L1250.0,211.53 L1252.0,211.49 L1254.0,211.44 L1256.0,211.38 L1258.0,211.30 L1260.0,211.23 L1262.0,211.15 L1264.0,211.07 L1266.0,211.00 L1268.0,210.92 L1270.0,210.84 L1272.0,210.77 L1274.0,210.69 L1276.0,210.61 L1278.0,210.53 L1280.0,210.46 L1282.0,210.38 L1284.0,210.30 L1286.0,210.23 L1288.0,210.15 L1290.0,210.07 L1292.0,210.00 L1294.0,209.93 L1296.0,209.87 L1298.0,209.83 L1300.0,209.83 L1302.0,209.85 L1304.0,209.90 L1306.0,209.97 L1308.0,210.05 L1310.0,210.13 L1312.0,210.21 L1314.0,210.30 L1316.0,210.38 L1318.0,210.46 L1320.0,210.54 L1322.0,210.63 L1324.0,210.71 L1326.0,210.79 L1328.0,210.88 L1330.0,210.96 L1332.0,211.04 L1334.0,211.12 L1336.0,211.21 L1338.0,211.29 L1340.0,211.37 L1342.0,211.46 L1344.0,211.54 L1345.5,211.60" fill="none" stroke="#6cc4a8" stroke-width="3.4" stroke-linecap="round"/>
<line x1="151.5" x2="151.5" y1="430.5" y2="470.0" stroke="#000" stroke-width="1.2"/>
<rect x="148.2" y="431.1" width="6.7" height="38.9" fill="#000"/>
<rect x="149.4" y="432.4" width="4.1" height="36.3" fill="#e3e3e6"/>
<line x1="159.5" x2="159.5" y1="403.0" y2="433.7" stroke="#000" stroke-width="1.2"/>
<rect x="156.2" y="418.8" width="6.7" height="12.3" fill="#000"/>
<rect x="157.4" y="420.1" width="4.1" height="9.7" fill="#e3e3e6"/>
<line x1="168.5" x2="168.5" y1="392.0" y2="420.8" stroke="#000" stroke-width="1.2"/>
<rect x="165.2" y="394.3" width="6.7" height="24.2" fill="#000"/>
<rect x="166.4" y="395.6" width="4.1" height="21.6" fill="#e3e3e6"/>
<line x1="176.5" x2="176.5" y1="392.3" y2="408.5" stroke="#000" stroke-width="1.2"/>
<rect x="173.2" y="394.7" width="6.7" height="6.7" fill="#000"/>
<line x1="185.5" x2="185.5" y1="390.4" y2="411.7" stroke="#000" stroke-width="1.2"/>
<rect x="182.2" y="401.1" width="6.7" height="2.6" fill="#000"/>
<line x1="194.5" x2="194.5" y1="383.9" y2="410.4" stroke="#000" stroke-width="1.2"/>
<rect x="191.2" y="385.5" width="6.7" height="17.8" fill="#000"/>
<rect x="192.4" y="386.8" width="4.1" height="15.2" fill="#e3e3e6"/>
<line x1="202.5" x2="202.5" y1="380.0" y2="397.5" stroke="#000" stroke-width="1.2"/>
<rect x="199.2" y="385.2" width="6.7" height="6.5" fill="#000"/>
<line x1="211.5" x2="211.5" y1="387.8" y2="404.6" stroke="#000" stroke-width="1.2"/>
<rect x="208.2" y="391.0" width="6.7" height="7.5" fill="#000"/>
<line x1="219.5" x2="219.5" y1="387.8" y2="399.4" stroke="#000" stroke-width="1.2"/>
<rect x="216.2" y="398.2" width="6.7" height="1.4" fill="#000"/>
<line x1="228.5" x2="228.5" y1="399.4" y2="408.5" stroke="#000" stroke-width="1.2"/>
<rect x="225.2" y="399.4" width="6.7" height="5.9" fill="#000"/>
<line x1="237.5" x2="237.5" y1="394.3" y2="420.1" stroke="#000" stroke-width="1.2"/>
<rect x="234.2" y="403.3" width="6.7" height="3.4" fill="#000"/>
<rect x="235.4" y="404.6" width="4.1" height="0.8" fill="#e3e3e6"/>
<line x1="245.5" x2="245.5" y1="398.2" y2="416.3" stroke="#000" stroke-width="1.2"/>
<rect x="242.2" y="400.4" width="6.7" height="3.4" fill="#000"/>
<rect x="243.4" y="401.7" width="4.1" height="0.8" fill="#e3e3e6"/>
<line x1="254.5" x2="254.5" y1="394.3" y2="407.9" stroke="#000" stroke-width="1.2"/>
<rect x="251.2" y="400.2" width="6.7" height="1.4" fill="#000"/>
<line x1="262.5" x2="262.5" y1="391.0" y2="406.6" stroke="#000" stroke-width="1.2"/>
<rect x="259.1" y="397.5" width="6.7" height="3.4" fill="#000"/>
<rect x="260.4" y="398.8" width="4.1" height="0.8" fill="#e3e3e6"/>
<line x1="271.5" x2="271.5" y1="383.3" y2="397.5" stroke="#000" stroke-width="1.2"/>
<rect x="268.1" y="386.5" width="6.7" height="11.0" fill="#000"/>
<rect x="269.4" y="387.8" width="4.1" height="8.4" fill="#e3e3e6"/>
<line x1="279.5" x2="279.5" y1="379.4" y2="402.7" stroke="#000" stroke-width="1.2"/>
<rect x="276.1" y="386.5" width="6.7" height="13.9" fill="#000"/>
<line x1="288.5" x2="288.5" y1="395.2" y2="401.1" stroke="#000" stroke-width="1.2"/>
<rect x="285.1" y="398.7" width="6.7" height="1.4" fill="#000"/>
<line x1="297.5" x2="297.5" y1="397.5" y2="405.3" stroke="#000" stroke-width="1.2"/>
<rect x="294.1" y="397.5" width="6.7" height="3.4" fill="#000"/>
<rect x="295.4" y="398.8" width="4.1" height="0.8" fill="#e3e3e6"/>
<line x1="305.5" x2="305.5" y1="393.0" y2="399.4" stroke="#000" stroke-width="1.2"/>
<rect x="302.1" y="396.7" width="6.7" height="1.4" fill="#000"/>
<line x1="314.5" x2="314.5" y1="381.3" y2="400.1" stroke="#000" stroke-width="1.2"/>
<rect x="311.1" y="386.5" width="6.7" height="10.0" fill="#000"/>
<rect x="312.4" y="387.8" width="4.1" height="7.4" fill="#e3e3e6"/>
<line x1="322.5" x2="322.5" y1="384.3" y2="391.7" stroke="#000" stroke-width="1.2"/>
<rect x="319.1" y="384.3" width="6.7" height="3.4" fill="#000"/>
<rect x="320.4" y="385.6" width="4.1" height="0.8" fill="#e3e3e6"/>
<line x1="331.5" x2="331.5" y1="374.2" y2="390.4" stroke="#000" stroke-width="1.2"/>
<rect x="328.1" y="384.3" width="6.7" height="5.4" fill="#000"/>
<line x1="340.5" x2="340.5" y1="387.8" y2="401.6" stroke="#000" stroke-width="1.2"/>
<rect x="337.1" y="389.3" width="6.7" height="12.3" fill="#000"/>
<line x1="348.5" x2="348.5" y1="396.4" y2="404.8" stroke="#000" stroke-width="1.2"/>
<rect x="345.1" y="399.3" width="6.7" height="1.4" fill="#000"/>
<line x1="357.5" x2="357.5" y1="398.3" y2="405.4" stroke="#000" stroke-width="1.2"/>
<rect x="354.1" y="398.3" width="6.7" height="3.4" fill="#000"/>
<rect x="355.4" y="399.6" width="4.1" height="0.8" fill="#e3e3e6"/>
<line x1="365.5" x2="365.5" y1="391.2" y2="404.8" stroke="#000" stroke-width="1.2"/>
<rect x="362.1" y="392.2" width="6.7" height="7.4" fill="#000"/>
<rect x="363.4" y="393.5" width="4.1" height="4.8" fill="#e3e3e6"/>
<line x1="374.5" x2="374.5" y1="387.0" y2="393.8" stroke="#000" stroke-width="1.2"/>
<rect x="371.1" y="392.4" width="6.7" height="1.4" fill="#000"/>
<line x1="383.5" x2="383.5" y1="385.0" y2="393.8" stroke="#000" stroke-width="1.2"/>
<rect x="380.1" y="392.5" width="6.7" height="1.4" fill="#000"/>
<line x1="391.5" x2="391.5" y1="388.4" y2="412.6" stroke="#000" stroke-width="1.2"/>
<rect x="388.1" y="392.2" width="6.7" height="19.7" fill="#000"/>
<line x1="400.5" x2="400.5" y1="399.6" y2="413.8" stroke="#000" stroke-width="1.2"/>
<rect x="397.1" y="405.7" width="6.7" height="5.8" fill="#000"/>
<rect x="398.4" y="407.0" width="4.1" height="3.2" fill="#e3e3e6"/>
<line x1="408.5" x2="408.5" y1="398.3" y2="406.7" stroke="#000" stroke-width="1.2"/>
<rect x="405.1" y="400.3" width="6.7" height="5.4" fill="#000"/>
<rect x="406.4" y="401.6" width="4.1" height="2.8" fill="#e3e3e6"/>
<line x1="417.5" x2="417.5" y1="398.3" y2="402.9" stroke="#000" stroke-width="1.2"/>
<rect x="414.1" y="400.5" width="6.7" height="1.4" fill="#000"/>
<line x1="426.5" x2="426.5" y1="382.8" y2="404.8" stroke="#000" stroke-width="1.2"/>
<rect x="423.1" y="384.1" width="6.7" height="17.2" fill="#000"/>
<rect x="424.4" y="385.4" width="4.1" height="14.6" fill="#e3e3e6"/>
<line x1="434.5" x2="434.5" y1="370.3" y2="386.7" stroke="#000" stroke-width="1.2"/>
<rect x="431.1" y="371.2" width="6.7" height="13.5" fill="#000"/>
<rect x="432.4" y="372.5" width="4.1" height="10.9" fill="#e3e3e6"/>
<line x1="443.5" x2="443.5" y1="365.3" y2="378.0" stroke="#000" stroke-width="1.2"/>
<rect x="440.1" y="371.2" width="6.7" height="4.5" fill="#000"/>
<line x1="451.5" x2="451.5" y1="375.0" y2="390.6" stroke="#000" stroke-width="1.2"/>
<rect x="448.1" y="375.0" width="6.7" height="13.9" fill="#000"/>
<line x1="460.5" x2="460.5" y1="388.4" y2="408.3" stroke="#000" stroke-width="1.2"/>
<rect x="457.1" y="388.4" width="6.7" height="7.3" fill="#000"/>
<line x1="468.5" x2="468.5" y1="395.4" y2="403.5" stroke="#000" stroke-width="1.2"/>
<rect x="465.1" y="395.4" width="6.7" height="4.2" fill="#000"/>
<line x1="477.5" x2="477.5" y1="396.1" y2="402.2" stroke="#000" stroke-width="1.2"/>
<rect x="474.1" y="398.4" width="6.7" height="1.4" fill="#000"/>
<line x1="486.5" x2="486.5" y1="384.1" y2="400.5" stroke="#000" stroke-width="1.2"/>
<rect x="483.1" y="397.9" width="6.7" height="1.4" fill="#000"/>
<line x1="494.5" x2="494.5" y1="391.2" y2="406.7" stroke="#000" stroke-width="1.2"/>
<rect x="491.1" y="398.3" width="6.7" height="3.3" fill="#000"/>
<line x1="503.5" x2="503.5" y1="398.3" y2="405.4" stroke="#000" stroke-width="1.2"/>
<rect x="500.1" y="400.2" width="6.7" height="1.4" fill="#000"/>
<line x1="511.5" x2="511.5" y1="398.3" y2="403.5" stroke="#000" stroke-width="1.2"/>
<rect x="508.1" y="400.2" width="6.7" height="1.4" fill="#000"/>
<line x1="520.5" x2="520.5" y1="396.1" y2="414.8" stroke="#000" stroke-width="1.2"/>
<rect x="517.1" y="400.3" width="6.7" height="12.3" fill="#000"/>
<line x1="529.5" x2="529.5" y1="407.4" y2="430.7" stroke="#000" stroke-width="1.2"/>
<rect x="526.1" y="411.9" width="6.7" height="11.6" fill="#000"/>
<line x1="537.5" x2="537.5" y1="421.2" y2="440.4" stroke="#000" stroke-width="1.2"/>
<rect x="534.1" y="422.9" width="6.7" height="6.9" fill="#000"/>
<line x1="546.5" x2="546.5" y1="408.3" y2="432.3" stroke="#000" stroke-width="1.2"/>
<rect x="543.1" y="411.3" width="6.7" height="18.1" fill="#000"/>
<rect x="544.5" y="412.6" width="4.1" height="15.5" fill="#e3e3e6"/>
<line x1="554.5" x2="554.5" y1="404.4" y2="414.1" stroke="#000" stroke-width="1.2"/>
<rect x="551.1" y="408.2" width="6.7" height="3.4" fill="#000"/>
<rect x="552.5" y="409.5" width="4.1" height="0.8" fill="#e3e3e6"/>
<line x1="563.5" x2="563.5" y1="406.3" y2="412.8" stroke="#000" stroke-width="1.2"/>
<rect x="560.1" y="408.2" width="6.7" height="2.0" fill="#000"/>
<line x1="572.5" x2="572.5" y1="400.5" y2="412.8" stroke="#000" stroke-width="1.2"/>
<rect x="569.1" y="409.9" width="6.7" height="1.4" fill="#000"/>
<line x1="580.5" x2="580.5" y1="406.3" y2="413.8" stroke="#000" stroke-width="1.2"/>
<rect x="577.1" y="409.9" width="6.7" height="1.4" fill="#000"/>
<line x1="589.5" x2="589.5" y1="407.6" y2="411.5" stroke="#000" stroke-width="1.2"/>
<rect x="586.1" y="409.1" width="6.7" height="1.4" fill="#000"/>
<line x1="597.5" x2="597.5" y1="400.5" y2="410.8" stroke="#000" stroke-width="1.2"/>
<rect x="594.1" y="402.4" width="6.7" height="6.8" fill="#000"/>
<rect x="595.5" y="403.7" width="4.1" height="4.2" fill="#e3e3e6"/>
<line x1="606.5" x2="606.5" y1="400.5" y2="408.2" stroke="#000" stroke-width="1.2"/>
<rect x="603.1" y="402.4" width="6.7" height="2.0" fill="#000"/>
<line x1="614.5" x2="614.5" y1="402.4" y2="413.8" stroke="#000" stroke-width="1.2"/>
<rect x="611.1" y="404.4" width="6.7" height="8.4" fill="#000"/>
<line x1="623.5" x2="623.5" y1="391.4" y2="413.8" stroke="#000" stroke-width="1.2"/>
<rect x="620.1" y="395.3" width="6.7" height="17.5" fill="#000"/>
<rect x="621.5" y="396.6" width="4.1" height="14.9" fill="#e3e3e6"/>
<line x1="632.5" x2="632.5" y1="389.2" y2="396.6" stroke="#000" stroke-width="1.2"/>
<rect x="629.1" y="393.4" width="6.7" height="3.4" fill="#000"/>
<rect x="630.5" y="394.7" width="4.1" height="0.8" fill="#e3e3e6"/>
<line x1="640.5" x2="640.5" y1="393.1" y2="404.4" stroke="#000" stroke-width="1.2"/>
<rect x="637.1" y="393.1" width="6.7" height="9.3" fill="#000"/>
<line x1="649.5" x2="649.5" y1="399.2" y2="403.5" stroke="#000" stroke-width="1.2"/>
<rect x="646.1" y="400.6" width="6.7" height="1.4" fill="#000"/>
<line x1="657.5" x2="657.5" y1="392.3" y2="401.4" stroke="#000" stroke-width="1.2"/>
<rect x="654.1" y="395.7" width="6.7" height="5.4" fill="#000"/>
<rect x="655.5" y="397.0" width="4.1" height="2.8" fill="#e3e3e6"/>
<line x1="666.5" x2="666.5" y1="393.4" y2="400.5" stroke="#000" stroke-width="1.2"/>
<rect x="663.1" y="395.7" width="6.7" height="2.6" fill="#000"/>
<line x1="675.5" x2="675.5" y1="390.8" y2="399.2" stroke="#000" stroke-width="1.2"/>
<rect x="672.1" y="391.8" width="6.7" height="6.5" fill="#000"/>
<rect x="673.5" y="393.1" width="4.1" height="3.9" fill="#e3e3e6"/>
<line x1="683.5" x2="683.5" y1="373.3" y2="392.3" stroke="#000" stroke-width="1.2"/>
<rect x="680.1" y="376.3" width="6.7" height="15.5" fill="#000"/>
<rect x="681.5" y="377.6" width="4.1" height="12.9" fill="#e3e3e6"/>
<line x1="692.5" x2="692.5" y1="353.3" y2="376.3" stroke="#000" stroke-width="1.2"/>
<rect x="689.1" y="358.5" width="6.7" height="17.8" fill="#000"/>
<rect x="690.5" y="359.8" width="4.1" height="15.2" fill="#e3e3e6"/>
<line x1="700.5" x2="700.5" y1="349.1" y2="361.7" stroke="#000" stroke-width="1.2"/>
<rect x="697.1" y="357.2" width="6.7" height="1.4" fill="#000"/>
<line x1="709.5" x2="709.5" y1="355.2" y2="361.3" stroke="#000" stroke-width="1.2"/>
<rect x="706.1" y="357.2" width="6.7" height="1.4" fill="#000"/>
<line x1="718.5" x2="718.5" y1="351.3" y2="358.5" stroke="#000" stroke-width="1.2"/>
<rect x="715.1" y="355.6" width="6.7" height="3.4" fill="#000"/>
<rect x="716.5" y="356.9" width="4.1" height="0.8" fill="#e3e3e6"/>
<line x1="726.5" x2="726.5" y1="344.0" y2="355.6" stroke="#000" stroke-width="1.2"/>
<rect x="723.1" y="351.7" width="6.7" height="3.9" fill="#000"/>
<rect x="724.5" y="353.0" width="4.1" height="1.3" fill="#e3e3e6"/>
<line x1="735.5" x2="735.5" y1="338.4" y2="358.5" stroke="#000" stroke-width="1.2"/>
<rect x="732.1" y="339.3" width="6.7" height="11.7" fill="#000"/>
<rect x="733.5" y="340.6" width="4.1" height="9.1" fill="#e3e3e6"/>
<line x1="743.5" x2="743.5" y1="310.1" y2="342.5" stroke="#000" stroke-width="1.2"/>
<rect x="740.1" y="316.6" width="6.7" height="22.6" fill="#000"/>
<rect x="741.5" y="317.9" width="4.1" height="20.0" fill="#e3e3e6"/>
<line x1="752.5" x2="752.5" y1="301.7" y2="321.8" stroke="#000" stroke-width="1.2"/>
<rect x="749.1" y="305.6" width="6.7" height="11.0" fill="#000"/>
<rect x="750.5" y="306.9" width="4.1" height="8.4" fill="#e3e3e6"/>
<line x1="761.5" x2="761.5" y1="286.2" y2="305.9" stroke="#000" stroke-width="1.2"/>
<rect x="758.1" y="298.5" width="6.7" height="7.1" fill="#000"/>
<rect x="759.5" y="299.8" width="4.1" height="4.5" fill="#e3e3e6"/>
<line x1="769.5" x2="769.5" y1="292.0" y2="301.7" stroke="#000" stroke-width="1.2"/>
<rect x="766.1" y="294.6" width="6.7" height="3.9" fill="#000"/>
<rect x="767.5" y="295.9" width="4.1" height="1.3" fill="#e3e3e6"/>
<line x1="778.5" x2="778.5" y1="271.3" y2="294.6" stroke="#000" stroke-width="1.2"/>
<rect x="775.1" y="278.5" width="6.7" height="16.1" fill="#000"/>
<rect x="776.5" y="279.8" width="4.1" height="13.5" fill="#e3e3e6"/>
<line x1="786.5" x2="786.5" y1="266.8" y2="283.0" stroke="#000" stroke-width="1.2"/>
<rect x="783.1" y="276.9" width="6.7" height="1.4" fill="#000"/>
<line x1="795.5" x2="795.5" y1="273.3" y2="290.7" stroke="#000" stroke-width="1.2"/>
<rect x="792.1" y="277.2" width="6.7" height="2.3" fill="#000"/>
<line x1="803.5" x2="803.5" y1="277.2" y2="299.8" stroke="#000" stroke-width="1.2"/>
<rect x="800.1" y="279.1" width="6.7" height="11.6" fill="#000"/>
<line x1="812.5" x2="812.5" y1="276.5" y2="302.4" stroke="#000" stroke-width="1.2"/>
<rect x="809.1" y="282.3" width="6.7" height="8.4" fill="#000"/>
<rect x="810.5" y="283.6" width="4.1" height="5.8" fill="#e3e3e6"/>
<line x1="821.5" x2="821.5" y1="278.5" y2="295.9" stroke="#000" stroke-width="1.2"/>
<rect x="818.1" y="281.4" width="6.7" height="1.4" fill="#000"/>
<line x1="829.5" x2="829.5" y1="274.3" y2="282.6" stroke="#000" stroke-width="1.2"/>
<rect x="826.1" y="279.5" width="6.7" height="3.4" fill="#000"/>
<rect x="827.5" y="280.8" width="4.1" height="0.8" fill="#e3e3e6"/>
<line x1="838.5" x2="838.5" y1="265.5" y2="279.5" stroke="#000" stroke-width="1.2"/>
<rect x="835.1" y="266.2" width="6.7" height="13.3" fill="#000"/>
<rect x="836.5" y="267.5" width="4.1" height="10.7" fill="#e3e3e6"/>
<line x1="846.5" x2="846.5" y1="259.1" y2="277.4" stroke="#000" stroke-width="1.2"/>
<rect x="843.1" y="266.2" width="6.7" height="7.3" fill="#000"/>
<line x1="855.5" x2="855.5" y1="265.3" y2="281.7" stroke="#000" stroke-width="1.2"/>
<rect x="852.1" y="273.2" width="6.7" height="1.4" fill="#000"/>
<line x1="864.5" x2="864.5" y1="270.0" y2="284.7" stroke="#000" stroke-width="1.2"/>
<rect x="861.1" y="272.6" width="6.7" height="3.4" fill="#000"/>
<rect x="862.5" y="273.9" width="4.1" height="0.8" fill="#e3e3e6"/>
<line x1="872.5" x2="872.5" y1="265.3" y2="284.7" stroke="#000" stroke-width="1.2"/>
<rect x="869.1" y="272.2" width="6.7" height="11.7" fill="#000"/>
<line x1="881.5" x2="881.5" y1="281.0" y2="309.8" stroke="#000" stroke-width="1.2"/>
<rect x="878.1" y="283.0" width="6.7" height="21.3" fill="#000"/>
<line x1="889.5" x2="889.5" y1="299.1" y2="315.7" stroke="#000" stroke-width="1.2"/>
<rect x="886.1" y="304.3" width="6.7" height="10.1" fill="#000"/>
<line x1="898.5" x2="898.5" y1="300.7" y2="317.3" stroke="#000" stroke-width="1.2"/>
<rect x="895.1" y="303.3" width="6.7" height="11.1" fill="#000"/>
<rect x="896.5" y="304.6" width="4.1" height="8.5" fill="#e3e3e6"/>
<line x1="907.5" x2="907.5" y1="280.4" y2="303.3" stroke="#000" stroke-width="1.2"/>
<rect x="904.1" y="281.3" width="6.7" height="22.0" fill="#000"/>
<rect x="905.5" y="282.6" width="4.1" height="19.4" fill="#e3e3e6"/>
<line x1="915.5" x2="915.5" y1="281.3" y2="297.2" stroke="#000" stroke-width="1.2"/>
<rect x="912.1" y="281.3" width="6.7" height="11.1" fill="#000"/>
<line x1="924.5" x2="924.5" y1="283.4" y2="296.6" stroke="#000" stroke-width="1.2"/>
<rect x="921.1" y="285.2" width="6.7" height="6.8" fill="#000"/>
<rect x="922.5" y="286.5" width="4.1" height="4.2" fill="#e3e3e6"/>
<line x1="932.5" x2="932.5" y1="262.3" y2="287.5" stroke="#000" stroke-width="1.2"/>
<rect x="929.1" y="262.3" width="6.7" height="22.9" fill="#000"/>
<rect x="930.5" y="263.6" width="4.1" height="20.3" fill="#e3e3e6"/>
<line x1="941.5" x2="941.5" y1="246.0" y2="264.5" stroke="#000" stroke-width="1.2"/>
<rect x="938.1" y="252.6" width="6.7" height="9.7" fill="#000"/>
<rect x="939.5" y="253.9" width="4.1" height="7.1" fill="#e3e3e6"/>
<line x1="950.5" x2="950.5" y1="225.3" y2="252.1" stroke="#000" stroke-width="1.2"/>
<rect x="947.1" y="227.5" width="6.7" height="24.6" fill="#000"/>
<rect x="948.5" y="228.8" width="4.1" height="22.0" fill="#e3e3e6"/>
<line x1="958.5" x2="958.5" y1="220.1" y2="238.2" stroke="#000" stroke-width="1.2"/>
<rect x="955.1" y="227.0" width="6.7" height="1.4" fill="#000"/>
<line x1="967.5" x2="967.5" y1="216.9" y2="236.3" stroke="#000" stroke-width="1.2"/>
<rect x="964.1" y="228.3" width="6.7" height="3.5" fill="#000"/>
<line x1="975.5" x2="975.5" y1="191.0" y2="231.1" stroke="#000" stroke-width="1.2"/>
<rect x="972.1" y="195.2" width="6.7" height="35.9" fill="#000"/>
<rect x="973.5" y="196.5" width="4.1" height="33.3" fill="#e3e3e6"/>
<line x1="984.5" x2="984.5" y1="174.9" y2="196.5" stroke="#000" stroke-width="1.2"/>
<rect x="981.1" y="179.4" width="6.7" height="15.8" fill="#000"/>
<rect x="982.5" y="180.7" width="4.1" height="13.2" fill="#e3e3e6"/>
<line x1="992.5" x2="992.5" y1="175.3" y2="208.9" stroke="#000" stroke-width="1.2"/>
<rect x="989.1" y="179.1" width="6.7" height="20.3" fill="#000"/>
<line x1="1001.5" x2="1001.5" y1="187.2" y2="216.6" stroke="#000" stroke-width="1.2"/>
<rect x="998.1" y="199.1" width="6.7" height="11.6" fill="#000"/>
<line x1="1010.5" x2="1010.5" y1="204.6" y2="215.6" stroke="#000" stroke-width="1.2"/>
<rect x="1007.1" y="210.4" width="6.7" height="1.4" fill="#000"/>
<line x1="1018.5" x2="1018.5" y1="196.2" y2="213.7" stroke="#000" stroke-width="1.2"/>
<rect x="1015.1" y="206.3" width="6.7" height="5.2" fill="#000"/>
<rect x="1016.5" y="207.6" width="4.1" height="2.6" fill="#e3e3e6"/>
<line x1="1027.5" x2="1027.5" y1="204.6" y2="230.5" stroke="#000" stroke-width="1.2"/>
<rect x="1024.2" y="205.9" width="6.7" height="16.8" fill="#000"/>
<line x1="1035.5" x2="1035.5" y1="218.2" y2="246.4" stroke="#000" stroke-width="1.2"/>
<rect x="1032.2" y="222.3" width="6.7" height="24.1" fill="#000"/>
<line x1="1044.5" x2="1044.5" y1="216.3" y2="246.4" stroke="#000" stroke-width="1.2"/>
<rect x="1041.2" y="220.1" width="6.7" height="26.3" fill="#000"/>
<rect x="1042.5" y="221.4" width="4.1" height="23.7" fill="#e3e3e6"/>
<line x1="1053.5" x2="1053.5" y1="220.1" y2="232.4" stroke="#000" stroke-width="1.2"/>
<rect x="1050.2" y="220.1" width="6.7" height="11.3" fill="#000"/>
<line x1="1061.5" x2="1061.5" y1="165.2" y2="231.1" stroke="#000" stroke-width="1.2"/>
<rect x="1058.2" y="171.4" width="6.7" height="59.7" fill="#000"/>
<rect x="1059.5" y="172.7" width="4.1" height="57.1" fill="#e3e3e6"/>
<line x1="1070.5" x2="1070.5" y1="165.0" y2="187.8" stroke="#000" stroke-width="1.2"/>
<rect x="1067.2" y="171.0" width="6.7" height="5.6" fill="#000"/>
<line x1="1078.5" x2="1078.5" y1="157.0" y2="182.0" stroke="#000" stroke-width="1.2"/>
<rect x="1075.2" y="175.9" width="6.7" height="1.4" fill="#000"/>
<line x1="1087.5" x2="1087.5" y1="174.0" y2="219.8" stroke="#000" stroke-width="1.2"/>
<rect x="1084.2" y="176.2" width="6.7" height="40.4" fill="#000"/>
<line x1="1096.5" x2="1096.5" y1="190.0" y2="221.8" stroke="#000" stroke-width="1.2"/>
<rect x="1093.2" y="194.3" width="6.7" height="22.0" fill="#000"/>
<rect x="1094.5" y="195.6" width="4.1" height="19.4" fill="#e3e3e6"/>
<line x1="1104.5" x2="1104.5" y1="187.2" y2="205.3" stroke="#000" stroke-width="1.2"/>
<rect x="1101.2" y="194.3" width="6.7" height="10.3" fill="#000"/>
<line x1="1113.5" x2="1113.5" y1="190.0" y2="210.7" stroke="#000" stroke-width="1.2"/>
<rect x="1110.2" y="203.7" width="6.7" height="1.4" fill="#000"/>
<line x1="1121.5" x2="1121.5" y1="202.0" y2="226.8" stroke="#000" stroke-width="1.2"/>
<rect x="1118.2" y="203.3" width="6.7" height="15.5" fill="#000"/>
<line x1="1130.5" x2="1130.5" y1="212.3" y2="227.8" stroke="#000" stroke-width="1.2"/>
<rect x="1127.2" y="216.4" width="6.7" height="3.4" fill="#000"/>
<rect x="1128.5" y="217.7" width="4.1" height="0.8" fill="#e3e3e6"/>
<line x1="1138.5" x2="1138.5" y1="204.5" y2="216.4" stroke="#000" stroke-width="1.2"/>
<rect x="1135.2" y="214.3" width="6.7" height="3.4" fill="#000"/>
<rect x="1136.5" y="215.6" width="4.1" height="0.8" fill="#e3e3e6"/>
<line x1="1147.5" x2="1147.5" y1="204.5" y2="231.4" stroke="#000" stroke-width="1.2"/>
<rect x="1144.2" y="214.0" width="6.7" height="8.6" fill="#000"/>
<line x1="1156.5" x2="1156.5" y1="212.3" y2="227.8" stroke="#000" stroke-width="1.2"/>
<rect x="1153.2" y="221.6" width="6.7" height="1.4" fill="#000"/>
<line x1="1164.5" x2="1164.5" y1="204.7" y2="224.7" stroke="#000" stroke-width="1.2"/>
<rect x="1161.2" y="209.5" width="6.7" height="12.1" fill="#000"/>
<rect x="1162.5" y="210.8" width="4.1" height="9.5" fill="#e3e3e6"/>
<line x1="1173.5" x2="1173.5" y1="204.7" y2="226.8" stroke="#000" stroke-width="1.2"/>
<rect x="1170.2" y="209.2" width="6.7" height="15.5" fill="#000"/>
<line x1="1181.5" x2="1181.5" y1="204.7" y2="227.8" stroke="#000" stroke-width="1.2"/>
<rect x="1178.2" y="223.1" width="6.7" height="1.4" fill="#000"/>
<line x1="1190.5" x2="1190.5" y1="221.1" y2="229.6" stroke="#000" stroke-width="1.2"/>
<rect x="1187.2" y="223.4" width="6.7" height="3.4" fill="#000"/>
<line x1="1199.5" x2="1199.5" y1="220.0" y2="226.5" stroke="#000" stroke-width="1.2"/>
<rect x="1196.2" y="223.7" width="6.7" height="3.4" fill="#000"/>
<rect x="1197.5" y="225.0" width="4.1" height="0.8" fill="#e3e3e6"/>
<line x1="1207.5" x2="1207.5" y1="215.1" y2="225.7" stroke="#000" stroke-width="1.2"/>
<rect x="1204.2" y="222.8" width="6.7" height="1.4" fill="#000"/>
<line x1="1216.5" x2="1216.5" y1="215.1" y2="225.7" stroke="#000" stroke-width="1.2"/>
<rect x="1213.2" y="222.8" width="6.7" height="1.4" fill="#000"/>
<line x1="1224.5" x2="1224.5" y1="208.1" y2="224.7" stroke="#000" stroke-width="1.2"/>
<rect x="1221.2" y="219.5" width="6.7" height="3.9" fill="#000"/>
<rect x="1222.5" y="220.8" width="4.1" height="1.3" fill="#e3e3e6"/>
<line x1="1233.5" x2="1233.5" y1="206.4" y2="219.5" stroke="#000" stroke-width="1.2"/>
<rect x="1230.2" y="208.1" width="6.7" height="11.4" fill="#000"/>
<rect x="1231.5" y="209.4" width="4.1" height="8.8" fill="#e3e3e6"/>
<line x1="1242.5" x2="1242.5" y1="179.2" y2="208.1" stroke="#000" stroke-width="1.2"/>
<rect x="1239.2" y="183.3" width="6.7" height="24.8" fill="#000"/>
<rect x="1240.5" y="184.6" width="4.1" height="22.2" fill="#e3e3e6"/>
<line x1="1250.5" x2="1250.5" y1="177.1" y2="192.6" stroke="#000" stroke-width="1.2"/>
<rect x="1247.2" y="183.3" width="6.7" height="4.1" fill="#000"/>
<line x1="1259.5" x2="1259.5" y1="184.9" y2="195.5" stroke="#000" stroke-width="1.2"/>
<rect x="1256.2" y="187.0" width="6.7" height="6.8" fill="#000"/>
<line x1="1267.5" x2="1267.5" y1="187.3" y2="206.6" stroke="#000" stroke-width="1.2"/>
<rect x="1264.2" y="193.4" width="6.7" height="8.6" fill="#000"/>
<line x1="1276.5" x2="1276.5" y1="200.5" y2="210.5" stroke="#000" stroke-width="1.2"/>
<rect x="1273.2" y="201.0" width="6.7" height="3.0" fill="#000"/>
<line x1="1285.5" x2="1285.5" y1="192.4" y2="211.5" stroke="#000" stroke-width="1.2"/>
<rect x="1282.2" y="195.2" width="6.7" height="8.8" fill="#000"/>
<rect x="1283.5" y="196.5" width="4.1" height="6.2" fill="#e3e3e6"/>
<line x1="1293.5" x2="1293.5" y1="189.8" y2="197.7" stroke="#000" stroke-width="1.2"/>
<rect x="1290.2" y="194.9" width="6.7" height="1.4" fill="#000"/>
<line x1="1302.5" x2="1302.5" y1="192.4" y2="209.8" stroke="#000" stroke-width="1.2"/>
<rect x="1299.2" y="195.2" width="6.7" height="12.4" fill="#000"/>
<line x1="1310.5" x2="1310.5" y1="203.4" y2="208.3" stroke="#000" stroke-width="1.2"/>
<rect x="1307.2" y="206.2" width="6.7" height="1.6" fill="#000"/>
<line x1="1319.5" x2="1319.5" y1="204.8" y2="209.5" stroke="#000" stroke-width="1.2"/>
<rect x="1316.2" y="206.2" width="6.7" height="3.3" fill="#000"/>
<line x1="1327.5" x2="1327.5" y1="209.0" y2="243.2" stroke="#000" stroke-width="1.2"/>
<rect x="1324.2" y="209.0" width="6.7" height="25.7" fill="#000"/>
<line x1="1336.5" x2="1336.5" y1="231.4" y2="241.0" stroke="#000" stroke-width="1.2"/>
<rect x="1333.2" y="234.2" width="6.7" height="3.3" fill="#000"/>
<line x1="1345.5" x2="1345.5" y1="233.2" y2="243.2" stroke="#000" stroke-width="1.2"/>
<rect x="1342.2" y="237.7" width="6.7" height="1.4" fill="#000"/>
<line x1="118" y1="462" x2="194" y2="377.8" stroke="#000" stroke-width="3" stroke-linecap="round"/>
<line x1="236" y1="419.8" x2="821.3" y2="412.5" stroke="#000" stroke-width="3" stroke-linecap="round"/>
<line x1="672.8" y1="391.5" x2="787" y2="266.4" stroke="#000" stroke-width="3" stroke-linecap="round"/>
<line x1="896.8" y1="300.8" x2="984.3" y2="174.3" stroke="#000" stroke-width="3" stroke-linecap="round"/>
<line x1="1080.1" y1="158.5" x2="1361.7" y2="189.4" stroke="#111" stroke-width="1.3"/>
<line x1="1250" y1="177" x2="1387.9" y2="216.7" stroke="#111" stroke-width="1.3"/>
<text x="1570.2" y="147.2" font-size="17" fill="#131722" text-anchor="start" font-weight="normal" textLength="96.6" lengthAdjust="spacingAndGlyphs" stroke="#131722" stroke-width="0.3">1 (4,949.36)</text>
<text x="1534.2" y="232.9" font-size="17" fill="#131722" text-anchor="start" font-weight="normal" textLength="132.6" lengthAdjust="spacingAndGlyphs" stroke="#131722" stroke-width="0.3">0.786 (4,081.60)</text>
<text x="1534.2" y="300.9" font-size="17" fill="#131722" text-anchor="start" font-weight="normal" textLength="132.6" lengthAdjust="spacingAndGlyphs" stroke="#131722" stroke-width="0.3">0.618 (3,400.36)</text>
<text x="1552.7" y="347.7" font-size="17" fill="#131722" text-anchor="start" font-weight="normal" textLength="114.1" lengthAdjust="spacingAndGlyphs" stroke="#131722" stroke-width="0.3">0.5 (2,921.87)</text>
<text x="1534.2" y="396.3" font-size="17" fill="#131722" text-anchor="start" font-weight="normal" textLength="132.6" lengthAdjust="spacingAndGlyphs" stroke="#131722" stroke-width="0.3">0.382 (2,443.38)</text>
<text x="1534.2" y="453.8" font-size="17" fill="#131722" text-anchor="start" font-weight="normal" textLength="132.6" lengthAdjust="spacingAndGlyphs" stroke="#131722" stroke-width="0.3">0.236 (1,851.35)</text>
</g>
<text x="26.51" y="70.0" font-size="16.5" fill="#131722" text-anchor="start" font-weight="normal" textLength="78.19" lengthAdjust="spacingAndGlyphs" stroke="#131722" stroke-width="0.3">Ethereum</text>
<text x="111.8" y="70.0" font-size="16.5" fill="#131722" text-anchor="start" font-weight="normal" textLength="4.87" lengthAdjust="spacingAndGlyphs" stroke="#131722" stroke-width="0.3">/</text>
<text x="125.8" y="70.0" font-size="16.5" fill="#131722" text-anchor="start" font-weight="normal" textLength="71.61" lengthAdjust="spacingAndGlyphs" stroke="#131722" stroke-width="0.3">TetherUS</text>
<text x="202.5" y="70.0" font-size="16.5" fill="#131722" text-anchor="start" font-weight="normal" textLength="6.88" lengthAdjust="spacingAndGlyphs" stroke="#131722" stroke-width="0.3">·</text>
<text x="214.88" y="70.0" font-size="16.5" fill="#131722" text-anchor="start" font-weight="normal" textLength="19.41" lengthAdjust="spacingAndGlyphs" stroke="#131722" stroke-width="0.3">1D</text>
<text x="240.1" y="70.0" font-size="16.5" fill="#131722" text-anchor="start" font-weight="normal" textLength="6.88" lengthAdjust="spacingAndGlyphs" stroke="#131722" stroke-width="0.3">·</text>
<text x="251.93" y="70.0" font-size="16.5" fill="#131722" text-anchor="start" font-weight="normal" textLength="63.96" lengthAdjust="spacingAndGlyphs" stroke="#131722" stroke-width="0.3">Binance</text>
<text x="325.93" y="70.0" font-size="16.5" fill="#131722" text-anchor="start" font-weight="normal" textLength="82.13" lengthAdjust="spacingAndGlyphs" stroke="#131722" stroke-width="0.3">O4,164.25</text>
<text x="419.42" y="70.0" font-size="16.5" fill="#131722" text-anchor="start" font-weight="normal" textLength="81.94" lengthAdjust="spacingAndGlyphs" stroke="#131722" stroke-width="0.3">H4,206.90</text>
<text x="511.21" y="70.0" font-size="16.5" fill="#131722" text-anchor="start" font-weight="normal" textLength="80.24" lengthAdjust="spacingAndGlyphs" stroke="#131722" stroke-width="0.3">L4,073.74</text>
<text x="601.13" y="70.0" font-size="16.5" fill="#131722" text-anchor="start" font-weight="normal" textLength="81.23" lengthAdjust="spacingAndGlyphs" stroke="#131722" stroke-width="0.3">C4,153.38</text>
<text x="692.86" y="70.0" font-size="16.5" fill="#131722" text-anchor="start" font-weight="normal" textLength="127.8" lengthAdjust="spacingAndGlyphs" stroke="#131722" stroke-width="0.3">−10.88 (−0.26%)</text>
<text x="26.72" y="95.8" font-size="16.5" fill="#131722" text-anchor="start" font-weight="normal" textLength="38.9" lengthAdjust="spacingAndGlyphs" stroke="#131722" stroke-width="0.3">SMAs</text>
<text x="1693" y="109.9" font-size="17" fill="#131722" text-anchor="start" font-weight="normal" textLength="69.5" lengthAdjust="spacingAndGlyphs" stroke="#131722" stroke-width="0.3">5,500.00</text>
<text x="1693" y="159.4" font-size="17" fill="#131722" text-anchor="start" font-weight="normal" textLength="69.5" lengthAdjust="spacingAndGlyphs" stroke="#131722" stroke-width="0.3">5,000.00</text>
<text x="1693" y="357.7" font-size="17" fill="#131722" text-anchor="start" font-weight="normal" textLength="69.5" lengthAdjust="spacingAndGlyphs" stroke="#131722" stroke-width="0.3">3,000.00</text>
<text x="1693" y="407.29999999999995" font-size="17" fill="#131722" text-anchor="start" font-weight="normal" textLength="69.5" lengthAdjust="spacingAndGlyphs" stroke="#131722" stroke-width="0.3">2,500.00</text>
<text x="1693" y="456.9" font-size="17" fill="#131722" text-anchor="start" font-weight="normal" textLength="69.5" lengthAdjust="spacingAndGlyphs" stroke="#131722" stroke-width="0.3">2,000.00</text>
<rect x="1681" y="454.8" width="95" height="93" fill="#fff"/>
<path d="M1680 104 H1767 Q1770 104 1770 107 V128 Q1770 131 1767 131 H1680 Z" fill="#000"/>
<text x="1693" y="122.80000000000001" font-size="17.5" fill="#fff" text-anchor="start" font-weight="normal" textLength="69.5" lengthAdjust="spacingAndGlyphs" stroke="#fff" stroke-width="0.5">5,369.50</text>
<path d="M1680 157.2 H1767 Q1770 157.2 1770 160.2 V180.6 Q1770 183.6 1767 183.6 H1680 Z" fill="#2b2b2b"/>
<text x="1693" y="175.8" font-size="17.5" fill="#fff" text-anchor="start" font-weight="normal" textLength="68.5" lengthAdjust="spacingAndGlyphs" stroke="#fff" stroke-width="0.5">4,835.81</text>
<path d="M1680 191.2 H1767 Q1770 191.2 1770 194.2 V214.8 Q1770 217.8 1767 217.8 H1680 Z" fill="#2b2b2b"/>
<text x="1693" y="209.9" font-size="17.5" fill="#fff" text-anchor="start" font-weight="normal" textLength="69.5" lengthAdjust="spacingAndGlyphs" stroke="#fff" stroke-width="0.5">4,492.09</text>
<path d="M1680 225 H1767 Q1770 225 1770 228 V294 Q1770 297 1767 297 H1680 Z" fill="#000"/>
<text x="1693" y="243.8" font-size="17.5" fill="#fff" text-anchor="start" font-weight="normal" textLength="69.5" lengthAdjust="spacingAndGlyphs" stroke="#fff" stroke-width="0.5">4,153.38</text>
<text x="1693" y="263.7" font-size="17.5" fill="#b8b8b8" text-anchor="start" font-weight="normal" textLength="43" lengthAdjust="spacingAndGlyphs" stroke="#b8b8b8" stroke-width="0.5">03:28</text>
<text x="1693" y="290.2" font-size="17.5" fill="#fff" text-anchor="start" font-weight="normal" textLength="69.5" lengthAdjust="spacingAndGlyphs" stroke="#fff" stroke-width="0.5">4,095.98</text>
<path d="M1680 296.8 H1767 Q1770 296.8 1770 299.8 V320.8 Q1770 323.8 1767 323.8 H1680 Z" fill="#2b2b2b"/>
<text x="1693" y="315.0" font-size="17.5" fill="#fff" text-anchor="start" font-weight="normal" textLength="69.5" lengthAdjust="spacingAndGlyphs" stroke="#fff" stroke-width="0.5">3,472.37</text>
<path d="M1680 354.3 H1767 Q1770 354.3 1770 357.3 V377.8 Q1770 380.8 1767 380.8 H1680 Z" fill="#000"/>
<text x="1693" y="372.2" font-size="17.5" fill="#fff" text-anchor="start" font-weight="normal" textLength="69.5" lengthAdjust="spacingAndGlyphs" stroke="#fff" stroke-width="0.5">2,852.02</text>
<rect x="1684.8" y="46.8" width="85.5" height="37.2" rx="6" fill="#fff" stroke="#ededed" stroke-width="1.2"/>
<text x="1699.4" y="71.8" font-size="17" fill="#131722" text-anchor="start" font-weight="normal" textLength="40.6" lengthAdjust="spacingAndGlyphs" stroke="#131722" stroke-width="0.3">USDT</text>
<g clip-path="url(#rsi)">
<rect x="16" y="487.4" width="1664" height="51.8" fill="#f0ecf8"/>
<line x1="16" x2="1680" y1="487.4" y2="487.4" stroke="#76787f" stroke-width="1.1" stroke-dasharray="5 6"/>
<line x1="16" x2="1680" y1="513.3" y2="513.3" stroke="#a4a6ad" stroke-width="1.1" stroke-dasharray="5 6"/>
<line x1="16" x2="1680" y1="539.2" y2="539.2" stroke="#76787f" stroke-width="1.1" stroke-dasharray="5 6"/>
<polygon points="15.5,507.7 21.3,505.2 30.1,508.2 38.9,506.7 47.7,503.5 55.2,507.2 65.2,506.2 74.0,506.2 82.8,507.2 90.3,502.2 99.1,501.5 107.9,503.2 116.7,507.2 125.5,505.2 134.2,505.7 143.0,507.2 149.3,476.4 159.3,471.3 168.1,466.3 176.9,474.3 184.4,476.4 193.2,471.3 202.0,477.6 210.8,483.4 219.6,484.6 228.4,490.7 237.2,489.7 246.0,488.2 254.7,488.9 262.3,487.7 271.0,482.1 279.8,496.4 288.6,495.9 296.1,494.7 304.9,493.9 313.7,488.2 322.5,487.7 331.3,493.2 338.8,503.2 347.6,503.5 356.4,502.7 365.2,497.7 374.0,498.9 382.7,498.2 391.5,517.3 399.0,511.5 407.8,508.2 416.6,509.7 425.4,497.7 434.2,490.2 443.0,494.7 451.8,504.7 458.8,509.0 467.6,513.3 476.4,512.2 485.1,512.8 493.9,515.3 502.7,514.0 511.5,514.0 520.3,522.8 527.8,530.3 536.6,534.1 546.6,517.8 554.2,515.3 562.9,517.8 571.7,517.8 580.5,517.3 588.0,515.8 596.8,510.2 605.6,511.5 614.4,517.3 621.9,504.7 630.7,503.5 639.5,510.7 648.3,509.7 657.1,505.7 665.9,508.5 674.6,503.2 683.4,493.2 691.0,484.6 699.7,484.6 708.5,487.1 717.3,484.6 726.1,482.6 734.9,478.1 743.7,471.3 752.5,468.8 761.2,467.6 768.8,467.1 777.6,464.6 786.3,464.1 795.1,465.6 803.9,478.1 812.7,475.9 821.5,475.6 829.0,475.1 837.8,472.1 846.6,479.4 855.4,479.6 864.2,479.6 872.9,496.4 881.7,507.7 890.5,514.0 898.6,507.6 906.6,497.7 915.4,504.1 924.3,500.9 932.8,490.7 940.9,488.8 949.4,482.7 958.3,482.9 966.3,484.8 975.1,476.8 984.2,474.1 993.1,485.3 1001.1,491.5 1010.0,492.3 1018.5,490.7 1027.1,500.9 1035.9,510.2 1044.0,501.4 1052.8,505.7 1060.8,490.2 1069.9,492.3 1078.8,492.8 1087.6,507.6 1095.6,502.2 1104.2,504.9 1112.8,504.9 1120.8,510.2 1129.6,509.4 1138.5,509.4 1147.0,512.1 1155.1,512.1 1163.6,506.8 1173.3,513.2 1181.3,512.9 1189.3,514.3 1198.4,512.9 1207.3,512.9 1216.1,512.9 1224.7,510.2 1233.2,504.9 1242.1,494.2 1250.1,497.7 1258.9,501.4 1267.5,506.2 1276.1,507.6 1284.9,503.0 1293.8,503.0 1302.3,510.2 1310.3,510.2 1319.7,512.9 1328.3,525.5 1336.6,526.8 1344.6,527.6 1344.6,487.4 15.5,487.4" fill="url(#gfill)" clip-path="url(#above70)"/>
<path d="M15.5,524.80 L17.5,524.51 L19.5,524.23 L21.5,523.94 L23.5,523.65 L25.5,523.37 L27.5,523.08 L29.5,522.79 L31.5,522.51 L33.5,522.22 L35.5,521.93 L37.5,521.65 L39.5,521.36 L41.5,521.08 L43.5,520.79 L45.5,520.50 L47.5,520.22 L49.5,519.93 L51.5,519.64 L53.5,519.36 L55.5,519.07 L57.5,518.78 L59.5,518.50 L61.5,518.21 L63.5,517.92 L65.5,517.64 L67.5,517.35 L69.5,517.06 L71.5,516.78 L73.5,516.49 L75.5,516.20 L77.5,515.92 L79.5,515.63 L81.5,515.34 L83.5,515.05 L85.5,514.75 L87.5,514.44 L89.5,514.13 L91.5,513.82 L93.5,513.51 L95.5,513.19 L97.5,512.88 L99.5,512.56 L101.5,512.25 L103.5,511.93 L105.5,511.61 L107.5,511.30 L109.5,510.98 L111.5,510.67 L113.5,510.35 L115.5,510.04 L117.5,509.72 L119.5,509.41 L121.5,509.09 L123.5,508.78 L125.5,508.46 L127.5,508.14 L129.5,507.83 L131.5,507.51 L133.5,507.20 L135.5,506.88 L137.5,506.55 L139.5,506.22 L141.5,505.85 L143.5,505.45 L145.5,505.02 L147.5,504.56 L149.5,504.08 L151.5,503.59 L153.5,503.10 L155.5,502.60 L157.5,502.11 L159.5,501.61 L161.5,501.12 L163.5,500.62 L165.5,500.12 L167.5,499.63 L169.5,499.13 L171.5,498.64 L173.5,498.14 L175.5,497.65 L177.5,497.15 L179.5,496.66 L181.5,496.16 L183.5,495.66 L185.5,495.17 L187.5,494.67 L189.5,494.18 L191.5,493.68 L193.5,493.19 L195.5,492.69 L197.5,492.20 L199.5,491.70 L201.5,491.21 L203.5,490.71 L205.5,490.23 L207.5,489.76 L209.5,489.32 L211.5,488.92 L213.5,488.55 L215.5,488.22 L217.5,487.90 L219.5,487.59 L221.5,487.29 L223.5,486.99 L225.5,486.69 L227.5,486.39 L229.5,486.09 L231.5,485.79 L233.5,485.49 L235.5,485.19 L237.5,484.89 L239.5,484.58 L241.5,484.28 L243.5,483.98 L245.5,483.68 L247.5,483.38 L249.5,483.08 L251.5,482.78 L253.5,482.48 L255.5,482.18 L257.5,481.88 L259.5,481.60 L261.5,481.35 L263.5,481.17 L265.5,481.09 L267.5,481.13 L269.5,481.28 L271.5,481.51 L273.5,481.79 L275.5,482.09 L277.5,482.41 L279.5,482.72 L281.5,483.03 L283.5,483.35 L285.5,483.66 L287.5,483.98 L289.5,484.29 L291.5,484.61 L293.5,484.92 L295.5,485.23 L297.5,485.55 L299.5,485.86 L301.5,486.18 L303.5,486.49 L305.5,486.80 L307.5,487.10 L309.5,487.39 L311.5,487.66 L313.5,487.92 L315.5,488.16 L317.5,488.39 L319.5,488.61 L321.5,488.83 L323.5,489.05 L325.5,489.27 L327.5,489.49 L329.5,489.70 L331.5,489.92 L333.5,490.14 L335.5,490.36 L337.5,490.58 L339.5,490.80 L341.5,491.02 L343.5,491.24 L345.5,491.46 L347.5,491.68 L349.5,491.90 L351.5,492.12 L353.5,492.34 L355.5,492.56 L357.5,492.78 L359.5,493.01 L361.5,493.24 L363.5,493.48 L365.5,493.73 L367.5,493.98 L369.5,494.23 L371.5,494.49 L373.5,494.74 L375.5,495.00 L377.5,495.25 L379.5,495.51 L381.5,495.76 L383.5,496.02 L385.5,496.27 L387.5,496.52 L389.5,496.78 L391.5,497.03 L393.5,497.28 L395.5,497.54 L397.5,497.79 L399.5,498.04 L401.5,498.29 L403.5,498.55 L405.5,498.80 L407.5,499.05 L409.5,499.30 L411.5,499.55 L413.5,499.78 L415.5,500.00 L417.5,500.20 L419.5,500.37 L421.5,500.53 L423.5,500.67 L425.5,500.81 L427.5,500.95 L429.5,501.09 L431.5,501.23 L433.5,501.37 L435.5,501.51 L437.5,501.64 L439.5,501.78 L441.5,501.92 L443.5,502.06 L445.5,502.20 L447.5,502.34 L449.5,502.47 L451.5,502.61 L453.5,502.75 L455.5,502.90 L457.5,503.05 L459.5,503.22 L461.5,503.41 L463.5,503.61 L465.5,503.82 L467.5,504.04 L469.5,504.26 L471.5,504.49 L473.5,504.71 L475.5,504.94 L477.5,505.16 L479.5,505.38 L481.5,505.61 L483.5,505.83 L485.5,506.05 L487.5,506.28 L489.5,506.50 L491.5,506.73 L493.5,506.95 L495.5,507.17 L497.5,507.39 L499.5,507.61 L501.5,507.82 L503.5,508.02 L505.5,508.23 L507.5,508.43 L509.5,508.63 L511.5,508.83 L513.5,509.02 L515.5,509.22 L517.5,509.43 L519.5,509.63 L521.5,509.85 L523.5,510.10 L525.5,510.37 L527.5,510.68 L529.5,511.02 L531.5,511.38 L533.5,511.75 L535.5,512.13 L537.5,512.50 L539.5,512.88 L541.5,513.26 L543.5,513.64 L545.5,514.01 L547.5,514.39 L549.5,514.77 L551.5,515.15 L553.5,515.52 L555.5,515.90 L557.5,516.25 L559.5,516.59 L561.5,516.87 L563.5,517.09 L565.5,517.25 L567.5,517.35 L569.5,517.42 L571.5,517.47 L573.5,517.51 L575.5,517.55 L577.5,517.59 L579.5,517.63 L581.5,517.67 L583.5,517.71 L585.5,517.75 L587.5,517.79 L589.5,517.83 L591.5,517.87 L593.5,517.91 L595.5,517.95 L597.5,517.99 L599.5,518.03 L601.5,518.07 L603.5,518.11 L605.5,518.14 L607.5,518.17 L609.5,518.18 L611.5,518.15 L613.5,518.07 L615.5,517.94 L617.5,517.77 L619.5,517.57 L621.5,517.35 L623.5,517.12 L625.5,516.89 L627.5,516.66 L629.5,516.44 L631.5,516.21 L633.5,515.98 L635.5,515.75 L637.5,515.52 L639.5,515.29 L641.5,515.06 L643.5,514.83 L645.5,514.59 L647.5,514.34 L649.5,514.06 L651.5,513.75 L653.5,513.41 L655.5,513.05 L657.5,512.66 L659.5,512.27 L661.5,511.87 L663.5,511.47 L665.5,511.08 L667.5,510.68 L669.5,510.28 L671.5,509.88 L673.5,509.48 L675.5,509.09 L677.5,508.69 L679.5,508.29 L681.5,507.89 L683.5,507.49 L685.5,507.10 L687.5,506.70 L689.5,506.29 L691.5,505.89 L693.5,505.49 L695.5,505.08 L697.5,504.68 L699.5,504.28 L701.5,503.87 L703.5,503.47 L705.5,503.06 L707.5,502.66 L709.5,502.26 L711.5,501.85 L713.5,501.45 L715.5,501.04 L717.5,500.64 L719.5,500.23 L721.5,499.81 L723.5,499.37 L725.5,498.90 L727.5,498.39 L729.5,497.85 L731.5,497.28 L733.5,496.70 L735.5,496.11 L737.5,495.51 L739.5,494.92 L741.5,494.32 L743.5,493.73 L745.5,493.14 L747.5,492.54 L749.5,491.95 L751.5,491.35 L753.5,490.76 L755.5,490.16 L757.5,489.57 L759.5,488.97 L761.5,488.36 L763.5,487.73 L765.5,487.10 L767.5,486.45 L769.5,485.78 L771.5,485.12 L773.5,484.45 L775.5,483.78 L777.5,483.11 L779.5,482.44 L781.5,481.77 L783.5,481.10 L785.5,480.43 L787.5,479.76 L789.5,479.09 L791.5,478.42 L793.5,477.76 L795.5,477.11 L797.5,476.49 L799.5,475.94 L801.5,475.48 L803.5,475.12 L805.5,474.85 L807.5,474.64 L809.5,474.46 L811.5,474.30 L813.5,474.13 L815.5,473.97 L817.5,473.82 L819.5,473.66 L821.5,473.50 L823.5,473.34 L825.5,473.18 L827.5,473.02 L829.5,472.86 L831.5,472.70 L833.5,472.55 L835.5,472.42 L837.5,472.31 L839.5,472.24 L841.5,472.21 L843.5,472.21 L845.5,472.24 L847.5,472.27 L849.5,472.31 L851.5,472.35 L853.5,472.39 L855.5,472.43 L857.5,472.49 L859.5,472.57 L861.5,472.70 L863.5,472.92 L865.5,473.24 L867.5,473.67 L869.5,474.16 L871.5,474.71 L873.5,475.27 L875.5,475.84 L877.5,476.41 L879.5,476.99 L881.5,477.56 L883.5,478.14 L885.5,478.73 L887.5,479.32 L889.5,479.94 L891.5,480.59 L893.5,481.25 L895.5,481.94 L897.5,482.63 L899.5,483.33 L901.5,484.03 L903.5,484.73 L905.5,485.41 L907.5,486.06 L909.5,486.67 L911.5,487.21 L913.5,487.66 L915.5,488.05 L917.5,488.39 L919.5,488.71 L921.5,489.01 L923.5,489.31 L925.5,489.61 L927.5,489.91 L929.5,490.21 L931.5,490.51 L933.5,490.80 L935.5,491.10 L937.5,491.39 L939.5,491.67 L941.5,491.92 L943.5,492.13 L945.5,492.30 L947.5,492.43 L949.5,492.53 L951.5,492.63 L953.5,492.71 L955.5,492.79 L957.5,492.87 L959.5,492.96 L961.5,493.04 L963.5,493.11 L965.5,493.18 L967.5,493.23 L969.5,493.25 L971.5,493.22 L973.5,493.16 L975.5,493.07 L977.5,492.97 L979.5,492.85 L981.5,492.74 L983.5,492.62 L985.5,492.50 L987.5,492.38 L989.5,492.26 L991.5,492.15 L993.5,492.03 L995.5,491.91 L997.5,491.78 L999.5,491.66 L1001.5,491.52 L1003.5,491.37 L1005.5,491.21 L1007.5,491.04 L1009.5,490.87 L1011.5,490.70 L1013.5,490.52 L1015.5,490.34 L1017.5,490.17 L1019.5,490.01 L1021.5,489.87 L1023.5,489.76 L1025.5,489.68 L1027.5,489.63 L1029.5,489.61 L1031.5,489.60 L1033.5,489.60 L1035.5,489.60 L1037.5,489.60 L1039.5,489.60 L1041.5,489.60 L1043.5,489.61 L1045.5,489.62 L1047.5,489.65 L1049.5,489.71 L1051.5,489.81 L1053.5,489.95 L1055.5,490.11 L1057.5,490.30 L1059.5,490.50 L1061.5,490.70 L1063.5,490.90 L1065.5,491.10 L1067.5,491.30 L1069.5,491.51 L1071.5,491.72 L1073.5,491.95 L1075.5,492.21 L1077.5,492.51 L1079.5,492.85 L1081.5,493.24 L1083.5,493.66 L1085.5,494.09 L1087.5,494.52 L1089.5,494.96 L1091.5,495.40 L1093.5,495.84 L1095.5,496.28 L1097.5,496.72 L1099.5,497.15 L1101.5,497.55 L1103.5,497.93 L1105.5,498.28 L1107.5,498.60 L1109.5,498.88 L1111.5,499.16 L1113.5,499.43 L1115.5,499.69 L1117.5,499.95 L1119.5,500.22 L1121.5,500.48 L1123.5,500.74 L1125.5,501.01 L1127.5,501.27 L1129.5,501.54 L1131.5,501.80 L1133.5,502.06 L1135.5,502.33 L1137.5,502.59 L1139.5,502.84 L1141.5,503.09 L1143.5,503.32 L1145.5,503.54 L1147.5,503.73 L1149.5,503.91 L1151.5,504.08 L1153.5,504.25 L1155.5,504.41 L1157.5,504.58 L1159.5,504.74 L1161.5,504.91 L1163.5,505.08 L1165.5,505.25 L1167.5,505.43 L1169.5,505.62 L1171.5,505.83 L1173.5,506.07 L1175.5,506.32 L1177.5,506.59 L1179.5,506.86 L1181.5,507.14 L1183.5,507.41 L1185.5,507.69 L1187.5,507.96 L1189.5,508.24 L1191.5,508.51 L1193.5,508.77 L1195.5,509.02 L1197.5,509.24 L1199.5,509.42 L1201.5,509.58 L1203.5,509.72 L1205.5,509.85 L1207.5,509.97 L1209.5,510.09 L1211.5,510.21 L1213.5,510.33 L1215.5,510.45 L1217.5,510.57 L1219.5,510.68 L1221.5,510.78 L1223.5,510.87 L1225.5,510.93 L1227.5,510.97 L1229.5,510.98 L1231.5,510.99 L1233.5,510.97 L1235.5,510.92 L1237.5,510.83 L1239.5,510.70 L1241.5,510.51 L1243.5,510.29 L1245.5,510.05 L1247.5,509.80 L1249.5,509.55 L1251.5,509.29 L1253.5,509.04 L1255.5,508.78 L1257.5,508.53 L1259.5,508.29 L1261.5,508.05 L1263.5,507.84 L1265.5,507.66 L1267.5,507.50 L1269.5,507.37 L1271.5,507.26 L1273.5,507.15 L1275.5,507.04 L1277.5,506.94 L1279.5,506.83 L1281.5,506.73 L1283.5,506.62 L1285.5,506.52 L1287.5,506.42 L1289.5,506.33 L1291.5,506.26 L1293.5,506.19 L1295.5,506.14 L1297.5,506.09 L1299.5,506.05 L1301.5,506.02 L1303.5,505.98 L1305.5,505.94 L1307.5,505.90 L1309.5,505.87 L1311.5,505.84 L1313.5,505.82 L1315.5,505.83 L1317.5,505.88 L1319.5,505.99 L1321.5,506.15 L1323.5,506.35 L1325.5,506.57 L1327.5,506.81 L1329.5,507.06 L1331.5,507.30 L1333.5,507.54 L1335.5,507.79 L1337.5,508.03 L1339.5,508.28 L1341.5,508.52 L1343.5,508.77 L1344.5,508.89" fill="none" stroke="#f3d34a" stroke-width="1.7"/>
<polyline points="15.5,507.7 21.3,505.2 30.1,508.2 38.9,506.7 47.7,503.5 55.2,507.2 65.2,506.2 74.0,506.2 82.8,507.2 90.3,502.2 99.1,501.5 107.9,503.2 116.7,507.2 125.5,505.2 134.2,505.7 143.0,507.2 149.3,476.4 159.3,471.3 168.1,466.3 176.9,474.3 184.4,476.4 193.2,471.3 202.0,477.6 210.8,483.4 219.6,484.6 228.4,490.7 237.2,489.7 246.0,488.2 254.7,488.9 262.3,487.7 271.0,482.1 279.8,496.4 288.6,495.9 296.1,494.7 304.9,493.9 313.7,488.2 322.5,487.7 331.3,493.2 338.8,503.2 347.6,503.5 356.4,502.7 365.2,497.7 374.0,498.9 382.7,498.2 391.5,517.3 399.0,511.5 407.8,508.2 416.6,509.7 425.4,497.7 434.2,490.2 443.0,494.7 451.8,504.7 458.8,509.0 467.6,513.3 476.4,512.2 485.1,512.8 493.9,515.3 502.7,514.0 511.5,514.0 520.3,522.8 527.8,530.3 536.6,534.1 546.6,517.8 554.2,515.3 562.9,517.8 571.7,517.8 580.5,517.3 588.0,515.8 596.8,510.2 605.6,511.5 614.4,517.3 621.9,504.7 630.7,503.5 639.5,510.7 648.3,509.7 657.1,505.7 665.9,508.5 674.6,503.2 683.4,493.2 691.0,484.6 699.7,484.6 708.5,487.1 717.3,484.6 726.1,482.6 734.9,478.1 743.7,471.3 752.5,468.8 761.2,467.6 768.8,467.1 777.6,464.6 786.3,464.1 795.1,465.6 803.9,478.1 812.7,475.9 821.5,475.6 829.0,475.1 837.8,472.1 846.6,479.4 855.4,479.6 864.2,479.6 872.9,496.4 881.7,507.7 890.5,514.0 898.6,507.6 906.6,497.7 915.4,504.1 924.3,500.9 932.8,490.7 940.9,488.8 949.4,482.7 958.3,482.9 966.3,484.8 975.1,476.8 984.2,474.1 993.1,485.3 1001.1,491.5 1010.0,492.3 1018.5,490.7 1027.1,500.9 1035.9,510.2 1044.0,501.4 1052.8,505.7 1060.8,490.2 1069.9,492.3 1078.8,492.8 1087.6,507.6 1095.6,502.2 1104.2,504.9 1112.8,504.9 1120.8,510.2 1129.6,509.4 1138.5,509.4 1147.0,512.1 1155.1,512.1 1163.6,506.8 1173.3,513.2 1181.3,512.9 1189.3,514.3 1198.4,512.9 1207.3,512.9 1216.1,512.9 1224.7,510.2 1233.2,504.9 1242.1,494.2 1250.1,497.7 1258.9,501.4 1267.5,506.2 1276.1,507.6 1284.9,503.0 1293.8,503.0 1302.3,510.2 1310.3,510.2 1319.7,512.9 1328.3,525.5 1336.6,526.8 1344.6,527.6" fill="none" stroke="#7e57c2" stroke-width="1.6" stroke-linejoin="round"/>
</g>
<text x="27.1" y="483.9" font-size="17" fill="#131722" text-anchor="start" font-weight="normal" textLength="23.6" lengthAdjust="spacingAndGlyphs" stroke="#131722" stroke-width="0.3">RSI</text>
<text x="1693.4" y="480.6" font-size="17" fill="#131722" text-anchor="start" font-weight="normal" textLength="43.5" lengthAdjust="spacingAndGlyphs" stroke="#131722" stroke-width="0.3">80.00</text>
<path d="M1680 488.8 H1741.8 Q1744.8 488.8 1744.8 491.8 V513 Q1744.8 516 1741.8 516 H1680 Z" fill="#fdd835"/>
<text x="1693.4" y="509.2" font-size="17.5" fill="#131722" text-anchor="start" font-weight="normal" textLength="43.5" lengthAdjust="spacingAndGlyphs" stroke="#131722" stroke-width="0.5">52.70</text>
<path d="M1680 516 H1741.8 Q1744.8 516 1744.8 519 V538.7 Q1744.8 541.7 1741.8 541.7 H1680 Z" fill="#7e57c2"/>
<text x="1693.4" y="535.1999999999999" font-size="17.5" fill="#fff" text-anchor="start" font-weight="normal" textLength="43" lengthAdjust="spacingAndGlyphs" stroke="#fff" stroke-width="0.5">38.81</text>
<g clip-path="url(#sto)">
<rect x="16" y="573.1" width="1664" height="47.2" fill="#e6f3fe"/>
<line x1="16" x2="1680" y1="573.1" y2="573.1" stroke="#76787f" stroke-width="1.1" stroke-dasharray="5 6"/>
<line x1="16" x2="1680" y1="597.3" y2="597.3" stroke="#a4a6ad" stroke-width="1.1" stroke-dasharray="5 6"/>
<line x1="16" x2="1680" y1="620.3" y2="620.3" stroke="#76787f" stroke-width="1.1" stroke-dasharray="5 6"/>
<polyline points="15.5,575.1 25.1,568.1 47.7,568.8 65.2,569.6 82.8,572.1 107.9,565.6 125.5,570.1 142.5,581.4 159.3,573.9 167.6,563.8 184.4,564.6 202.0,566.3 228.4,574.6 246.0,576.4 271.0,572.6 296.1,595.2 304.9,593.2 322.5,575.6 331.3,574.6 347.6,594.0 356.4,600.2 365.2,600.2 382.7,600.7 391.5,610.8 407.8,619.0 416.6,612.8 425.4,599.0 433.7,582.7 443.0,570.6 451.8,575.6 467.6,603.2 485.1,609.8 511.5,613.3 529.1,623.3 536.6,625.8 562.9,603.2 588.0,592.7 605.6,582.7 625.7,574.6 640.8,568.8 665.9,575.6 683.4,570.1 691.0,563.1 726.1,566.3 751.2,560.6 776.3,562.6 795.1,563.1 812.7,569.6 821.5,570.6 837.8,564.6 855.4,565.6 864.2,571.4 876.7,586.4 889.3,618.3 899.4,624.8 906.6,611.9 924.3,592.7 940.9,572.3 949.4,563.2 966.3,565.1 984.2,562.4 993.1,563.2 1010.0,573.9 1027.1,579.3 1035.9,588.4 1052.8,598.5 1060.8,585.2 1069.9,578.5 1078.8,567.8 1087.6,583.8 1104.2,596.4 1112.8,593.7 1120.8,601.2 1147.0,608.7 1163.6,611.4 1189.9,626.7 1207.3,622.6 1224.7,615.1 1233.2,598.5 1250.1,569.1 1258.9,571.2 1276.1,589.2 1283.6,591.1 1302.3,588.4 1319.7,602.6 1344.6,624.8" fill="none" stroke="#f57c2b" stroke-width="1.6" stroke-linejoin="round"/>
<polyline points="15.5,563.1 25.1,568.8 37.6,568.8 47.7,562.6 56.4,569.6 65.2,570.1 74.0,572.1 82.8,572.6 90.3,565.6 99.1,564.6 107.9,566.3 116.7,572.6 125.5,569.6 134.2,586.4 142.5,589.7 150.1,560.1 159.3,572.6 167.6,558.8 175.7,564.6 184.4,568.8 193.2,562.1 202.0,567.1 210.8,572.1 219.6,573.1 228.4,577.6 237.2,575.6 246.0,573.9 254.7,575.6 262.3,573.1 271.0,567.6 279.8,596.5 287.4,596.5 296.1,592.7 304.9,590.2 313.7,571.4 322.5,567.6 331.3,582.7 338.8,600.2 347.6,600.7 356.4,601.5 365.2,598.2 374.0,602.2 382.7,600.7 391.5,630.8 400.3,616.5 407.8,607.8 416.6,611.5 425.4,580.1 433.7,559.6 443.0,575.1 451.8,595.2 458.8,601.5 467.6,611.5 476.4,609.0 485.1,609.8 493.9,614.8 502.7,612.3 511.5,614.0 520.3,629.1 529.1,625.3 536.6,623.3 546.6,604.7 554.2,600.7 562.9,599.7 571.7,593.9 580.5,592.7 588.0,590.7 596.8,582.7 605.6,578.1 614.4,584.7 621.9,564.6 630.7,563.8 640.8,576.4 648.3,575.1 657.1,568.8 665.9,584.7 674.6,563.1 683.4,562.1 691.0,563.1 699.7,565.6 708.5,568.8 717.3,565.6 726.1,565.6 734.9,558.1 743.7,562.1 752.5,560.6 761.2,565.6 768.8,563.1 777.6,561.3 786.3,562.6 795.1,563.8 803.9,573.9 812.7,569.6 821.5,568.1 829.0,567.6 837.8,558.1 846.6,568.1 855.4,570.6 864.2,573.1 872.9,599.0 880.5,626.6 889.3,631.6 898.6,617.3 906.6,586.5 915.4,601.2 924.3,591.9 931.5,561.6 940.9,563.7 949.4,562.4 958.3,564.3 966.3,568.6 975.1,560.5 984.2,558.9 993.1,570.4 1001.1,576.6 1010.0,577.7 1018.5,576.6 1027.1,588.4 1035.9,602.6 1044.0,588.4 1052.8,605.2 1060.8,562.4 1069.9,567.0 1078.8,571.8 1087.6,607.9 1095.6,588.4 1104.2,597.2 1112.8,595.9 1120.8,609.3 1129.6,607.9 1138.5,606.6 1147.0,613.3 1155.1,611.9 1163.6,609.8 1173.3,625.9 1181.3,625.3 1189.9,629.3 1198.4,623.2 1207.3,619.4 1216.1,617.8 1224.7,609.8 1233.2,571.8 1242.1,563.2 1250.1,571.8 1258.9,579.8 1267.5,593.2 1276.1,595.9 1283.6,583.8 1292.9,584.6 1302.3,601.2 1310.3,602.6 1319.7,607.9 1328.3,621.3 1336.6,625.3 1344.6,626.7" fill="none" stroke="#3d64e6" stroke-width="1.6" stroke-linejoin="round"/>
</g>
<text x="27" y="577.6" font-size="17" fill="#131722" text-anchor="start" font-weight="normal" textLength="44" lengthAdjust="spacingAndGlyphs" stroke="#131722" stroke-width="0.3">Stoch</text>
<text x="1694.5" y="563.9" font-size="17" fill="#131722" text-anchor="start" font-weight="normal" textLength="51.7" lengthAdjust="spacingAndGlyphs" stroke="#131722" stroke-width="0.3">100.00</text>
<path d="M1680 588 H1741.8 Q1744.8 588 1744.8 591 V611.9 Q1744.8 614.9 1741.8 614.9 H1680 Z" fill="#ff6d00"/>
<text x="1694.5" y="608.5" font-size="17.5" fill="#fff" text-anchor="start" font-weight="normal" textLength="42.4" lengthAdjust="spacingAndGlyphs" stroke="#fff" stroke-width="0.5">13.89</text>
<path d="M1680 614.9 H1741.8 Q1744.8 614.9 1744.8 617.9 V637.8 Q1744.8 640.8 1741.8 640.8 H1680 Z" fill="#2962ff"/>
<text x="1694.5" y="634.4" font-size="17.5" fill="#fff" text-anchor="start" font-weight="normal" textLength="42.4" lengthAdjust="spacingAndGlyphs" stroke="#fff" stroke-width="0.5">11.45</text>
<svg x="16" y="640" width="1664" height="42" overflow="hidden"><g transform="translate(-16,-640)">
<text x="90.2" y="668.9" font-size="17" fill="#131722" text-anchor="middle" font-weight="normal" stroke="#131722" stroke-width="0.55">May</text>
<text x="356.3" y="668.9" font-size="17" fill="#131722" text-anchor="middle" font-weight="normal" stroke="#131722" stroke-width="0.55">Jun</text>
<text x="614" y="668.9" font-size="17" fill="#131722" text-anchor="middle" font-weight="normal" stroke="#131722" stroke-width="0.55">Jul</text>
<text x="882" y="668.9" font-size="17" fill="#131722" text-anchor="middle" font-weight="normal" stroke="#131722" stroke-width="0.55">Aug</text>
<text x="1148" y="668.9" font-size="17" fill="#131722" text-anchor="middle" font-weight="normal" stroke="#131722" stroke-width="0.55">Sep</text>
<text x="1405.6" y="668.9" font-size="17" fill="#131722" text-anchor="middle" font-weight="normal" stroke="#131722" stroke-width="0.55">Oct</text>
<text x="1672.2" y="668.9" font-size="17" fill="#131722" text-anchor="middle" font-weight="normal" stroke="#131722" stroke-width="0.55">Nov</text>
</g></svg>
<g fill="#131722"><path d="M18 716.2 H36 V738.1 H27.8 V724.6 H18 Z"/><circle cx="43" cy="719.8" r="3.6"/><path d="M51.6 716.2 H62.5 L55.5 738.1 H44.2 Z"/></g>
<text x="74.2" y="738.1" font-size="30" fill="#131722" text-anchor="start" font-weight="normal" textLength="180.3" lengthAdjust="spacingAndGlyphs" stroke="#131722" stroke-width="0.5">TradingView</text>
</svg></body></html>
